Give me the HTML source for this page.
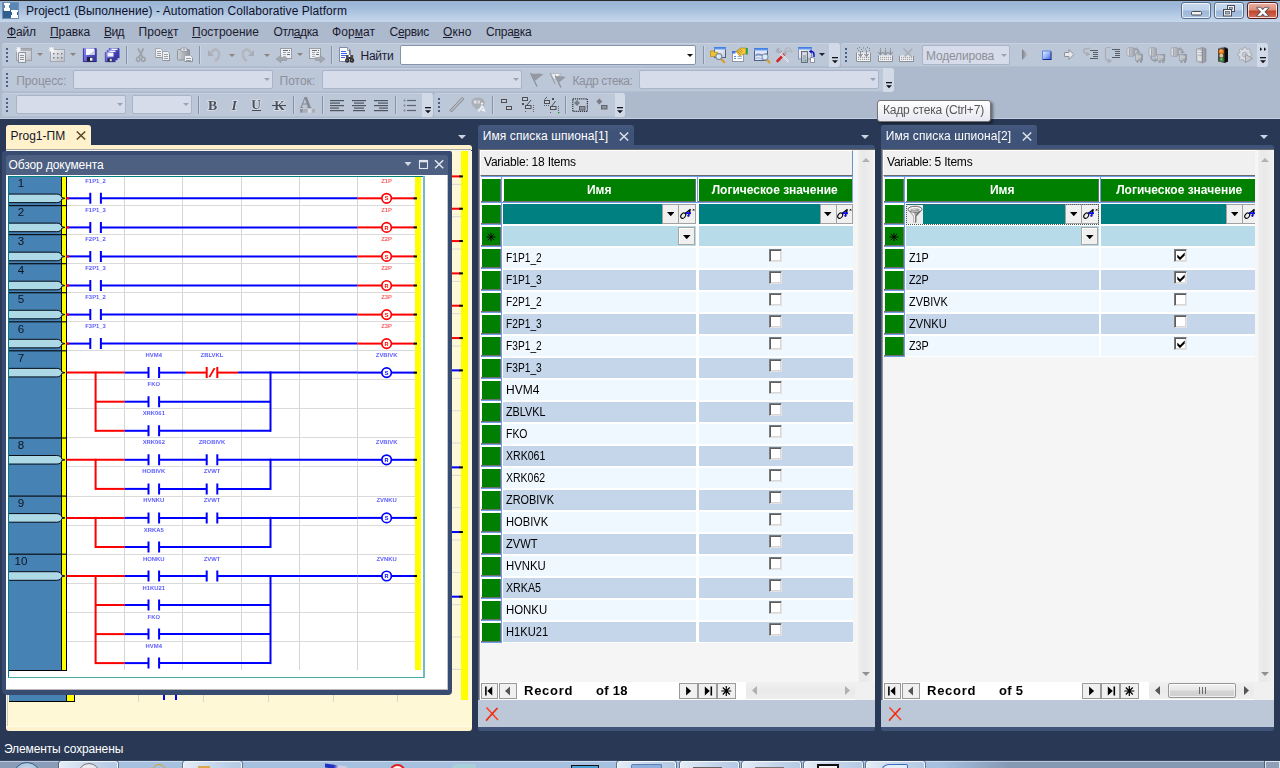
<!DOCTYPE html>
<html><head><meta charset="utf-8"><title>Automation Collaborative Platform</title>
<style>
*{box-sizing:border-box;margin:0;padding:0}
html,body{width:1280px;height:768px;overflow:hidden;background:#293955;font-family:"Liberation Sans",sans-serif;font-size:12px;color:#000}
.a{position:absolute}
.t{position:absolute;white-space:pre;line-height:1}
#title{left:0;top:0;width:1280px;height:22px;background:linear-gradient(#97b3d4 0,#a3bddb 40%,#b9cee6 75%,#c4d6ea 100%)}
#topline{left:0;top:0;width:1280px;height:1px;background:#2a2a2a}
#chrome{left:0;top:22px;width:1280px;height:97px;background:#adb9cd}
#chromeline{left:0;top:118px;width:1280px;height:1px;background:#c3cddd}
.tb{position:absolute;background:#bcc7d8;border-radius:3px;border-top:1px solid #c6d0df;border-bottom:1px solid #b2bed1}
.ovf{position:absolute;background:#d3dae7;border-radius:0 3px 3px 0}
.sep{position:absolute;width:1px;background:#8591a8}
.sep2{position:absolute;width:1px;background:#d4dbe8}
.grip{position:absolute;width:3px;height:15px;background:repeating-linear-gradient(#4f6289 0,#4f6289 2px,transparent 2px,transparent 4px)}
.cbd{position:absolute;background:#d6dce9;border:1px solid #a9b4c9;border-radius:2px}
.menu{top:26px;font-size:12px;color:#1b1b2f}
.menu u{text-decoration:underline;text-underline-offset:1px}
.wb{position:absolute;top:2px;height:17px;border-radius:3px;border:1px solid #596d8c;box-shadow:inset 0 0 0 1px rgba(255,255,255,.75);background:linear-gradient(#c8d9ee 0,#bfd2ea 48%,#9cb7d8 52%,#a9c2e0 100%)}
</style></head>
<body>
<div class="a" id="title"></div><div class="a" id="topline"></div>
<svg class="a" style="left:2px;top:2px" width="17" height="17" viewBox="0 0 17 17">
<rect x="0.5" y="0.5" width="16" height="16" fill="#2f5f8f" stroke="#6f8fb5"/>
<rect x="1" y="1" width="15" height="7" fill="#5c86b4"/>
<path d="M2 1h6v2h-1v3h1v3h-6v-3h1v-3h-1z" fill="#fff"/>
<path d="M9 8h7v2h-1v3h1v3h-7v-3h1v-3h-1z" fill="#fff"/>
</svg>
<div class="t " style="left:26px;top:5px;font-size:12px;color:#10102a;letter-spacing:0.065px;">Project1 (Выполнение) - Automation Collaborative Platform</div>
<div class="wb" style="left:1181px;width:30px"></div>
<div class="wb" style="left:1214px;width:30px"></div>
<div class="wb" style="left:1247px;width:31px;border-color:#5c1a1a;background:linear-gradient(#e9b0a2 0,#dc8e7b 48%,#c0452b 52%,#d4705a 100%)"></div>
<svg class="a" style="left:1181px;top:2px" width="97" height="17" viewBox="0 0 97 17">
<rect x="10.5" y="9.500" width="10" height="3.500" rx="1" fill="#f4f4f4" stroke="#4a4a55"/>
<rect x="46.5" y="3.500" width="7" height="6" fill="#f2f2f2" stroke="#4a4a55"/><rect x="48.5" y="5.5" width="3" height="2" fill="#9bb4d4" stroke="#4a4a55" stroke-width=".6"/>
<rect x="42.5" y="7.500" width="8" height="6.500" fill="#f2f2f2" stroke="#4a4a55"/><rect x="44.5" y="9.5" width="4" height="2.500" fill="#9bb4d4" stroke="#4a4a55" stroke-width=".6"/>
<clipPath id="xc"><rect x="75" y="5.300" width="14" height="9"/></clipPath><g clip-path="url(#xc)"><path d="M76.500 4.300l10.500 11M87 4.300l-10.500 11" stroke="#4e4e58" stroke-width="4.200"/><path d="M76.500 4.300l10.500 11M87 4.300l-10.500 11" stroke="#fbfbfb" stroke-width="2.500"/></g><path d="M75.800 5.300h3.600M84 5.300h3.600M75.800 14.300h3.600M84 14.300h3.600" stroke="#4e4e58" stroke-width=".8"/>
</svg>
<div class="a" id="chrome"></div><div class="a" id="chromeline"></div>
<div class="t menu" style="left:7px;top:26px;font-size:12px;color:#1b1b2f;letter-spacing:-0.13px;"><u>Ф</u>айл</div>
<div class="t menu" style="left:50px;top:26px;font-size:12px;color:#1b1b2f;letter-spacing:-0.092px;"><u>П</u>равка</div>
<div class="t menu" style="left:104px;top:26px;font-size:12px;color:#1b1b2f;letter-spacing:-0.573px;"><u>В</u>ид</div>
<div class="t menu" style="left:138.5px;top:26px;font-size:12px;color:#1b1b2f;letter-spacing:0.078px;">Прое<u>к</u>т</div>
<div class="t menu" style="left:192px;top:26px;font-size:12px;color:#1b1b2f;letter-spacing:0.017px;"><u>П</u>остроение</div>
<div class="t menu" style="left:273.5px;top:26px;font-size:12px;color:#1b1b2f;letter-spacing:-0.42px;">Отл<u>а</u>дка</div>
<div class="t menu" style="left:332px;top:26px;font-size:12px;color:#1b1b2f;letter-spacing:0.06px;">Фор<u>м</u>ат</div>
<div class="t menu" style="left:389.5px;top:26px;font-size:12px;color:#1b1b2f;letter-spacing:-0.265px;">С<u>е</u>рвис</div>
<div class="t menu" style="left:443px;top:26px;font-size:12px;color:#1b1b2f;letter-spacing:0.152px;"><u>О</u>кно</div>
<div class="t menu" style="left:486px;top:26px;font-size:12px;color:#1b1b2f;letter-spacing:-0.226px;">Спра<u>в</u>ка</div>
<div class="tb" style="left:2px;top:43px;width:838px;height:24px"></div>
<div class="ovf" style="left:829px;top:43px;width:11px;height:24px"></div>
<div class="t" style="left:360.5px;top:49.5px;font-size:12px;color:#1b1b33;letter-spacing:-0.25px;">Найти</div>
<div class="a" style="left:400px;top:45px;width:296px;height:20px;background:#fff;border:1px solid #8593ad;border-radius:2px"></div>
<div class="tb" style="left:841px;top:43px;width:427px;height:24px"></div>
<div class="ovf" style="left:1257px;top:43px;width:11px;height:24px"></div>
<div class="cbd" style="left:922px;top:45px;width:88px;height:20px"></div>
<div class="t" style="left:926px;top:49.6px;font-size:12px;color:#8d8f9a;letter-spacing:-0.18px;">Моделирова</div>
<div class="tb" style="left:2px;top:68px;width:892px;height:24px"></div>
<div class="ovf" style="left:883px;top:68px;width:11px;height:24px"></div>
<div class="t" style="left:16.2px;top:74.5px;font-size:12px;color:#8d8f9a;letter-spacing:-0.08px;">Процесс:</div>
<div class="cbd" style="left:73px;top:70px;width:200px;height:19px"></div>
<div class="t" style="left:279.5px;top:74.5px;font-size:12px;color:#8d8f9a;letter-spacing:0px;">Поток:</div>
<div class="cbd" style="left:322px;top:70px;width:200px;height:19px"></div>
<div class="t" style="left:572.5px;top:74.5px;font-size:12px;color:#8d8f9a;letter-spacing:-0.38px;">Кадр стека:</div>
<div class="cbd" style="left:639px;top:70px;width:240px;height:19px"></div>
<div class="tb" style="left:2px;top:93px;width:431px;height:24px"></div>
<div class="ovf" style="left:422px;top:93px;width:11px;height:24px"></div>
<div class="cbd" style="left:16px;top:95px;width:110px;height:19px"></div>
<div class="cbd" style="left:132px;top:95px;width:60px;height:19px"></div>
<div class="tb" style="left:434px;top:93px;width:191px;height:24px"></div>
<div class="ovf" style="left:615px;top:93px;width:10px;height:24px"></div>
<svg class="a" style="left:0;top:43px;will-change:transform" width="1280" height="75" viewBox="0 43 1280 75"><defs><linearGradient id="gw" x1="0" y1="0" x2="1" y2="1"><stop offset="0" stop-color="#f4f5f7"/><stop offset="1" stop-color="#b9bdc4"/></linearGradient><linearGradient id="gd" x1="0" y1="0" x2="1" y2="0"><stop offset="0" stop-color="#d0d3d8"/><stop offset="1" stop-color="#8f939b"/></linearGradient><linearGradient id="sv" x1="0" y1="0" x2="1" y2="0.300"><stop offset="0" stop-color="#9696f2"/><stop offset=".45" stop-color="#6060d4"/><stop offset="1" stop-color="#3a3aa6"/></linearGradient><linearGradient id="bt" x1="0" y1="0" x2="0" y2="1"><stop offset="0" stop-color="#3a74e0"/><stop offset="1" stop-color="#78aaf4"/></linearGradient><linearGradient id="st" x1="0" y1="0" x2="1" y2="1"><stop offset="0" stop-color="#e8f0ff"/><stop offset=".55" stop-color="#8fb0f4"/><stop offset="1" stop-color="#3a66d8"/></linearGradient><linearGradient id="wb" x1="0" y1="0" x2="1" y2="1"><stop offset="0" stop-color="#ffffff"/><stop offset="1" stop-color="#c4cad8"/></linearGradient><linearGradient id="gc" x1="0" y1="0" x2="1" y2="0"><stop offset="0" stop-color="#d4d7dc"/><stop offset="1" stop-color="#9ea2aa"/></linearGradient><linearGradient id="gp" x1="0" y1="0" x2="1" y2="0"><stop offset="0" stop-color="#7d8189"/><stop offset="1" stop-color="#c4c7cc"/></linearGradient></defs><rect x="6" y="48" width="2" height="2" fill="#4a5f8c"/><rect x="6" y="52" width="2" height="2" fill="#4a5f8c"/><rect x="6" y="56" width="2" height="2" fill="#4a5f8c"/><rect x="6" y="60" width="2" height="2" fill="#4a5f8c"/><rect x="16.5" y="48.5" width="15" height="12" fill="url(#gw)" stroke="#9da1a8" stroke-width="1"/><rect x="17" y="49" width="14" height="2" fill="#a9adb4"/><rect x="18.5" y="52.5" width="7" height="10" fill="#edeff2" stroke="#8f939b" stroke-width="1"/><rect x="20" y="55" width="4" height="1" fill="#8f939b"/><rect x="20" y="57" width="4" height="1" fill="#8f939b"/><rect x="20" y="59" width="4" height="1" fill="#8f939b"/><path d="M18.5 47v5.500M15.7 49.7h5.600M16.5 47.7l4 4M20.5 47.7l-4 4" stroke="#f6f7f9" stroke-width="1.100"/><path d="M37 53h6l-3.0 3z" fill="#8a847e"/><rect x="50.5" y="49.5" width="14" height="12" fill="url(#gw)" stroke="#a4a8af" stroke-width="1"/><rect x="53" y="53" width="1.5" height="1.5" fill="#7d8189"/><rect x="53" y="57" width="1.5" height="1.5" fill="#7d8189"/><rect x="57" y="53" width="1.5" height="1.5" fill="#7d8189"/><rect x="57" y="57" width="1.5" height="1.5" fill="#7d8189"/><rect x="61" y="53" width="1.5" height="1.5" fill="#7d8189"/><rect x="61" y="57" width="1.5" height="1.5" fill="#7d8189"/><path d="M51.5 47v5.500M48.7 49.7h5.600M49.5 47.7l4 4M53.5 47.7l-4 4" stroke="#f6f7f9" stroke-width="1.100"/><path d="M70 53h6l-3.0 3z" fill="#8a847e"/><path d="M83 48h13l.8 .8v13.200h-13.800z" fill="url(#sv)"/><path d="M83.400 48.400v13.200h13" fill="none" stroke="#24247c" stroke-width=".8"/><rect x="86" y="48.5" width="8.5" height="6.5" fill="#f6f7ff"/><path d="M94.500 50.500v4.500h-6z" fill="#c9cde0"/><rect x="87" y="57" width="6" height="4.5" fill="#20203c"/><rect x="90" y="57.8" width="2.5" height="3" fill="#eeeef4"/><path d="M109 48h9.700l.8 .8v9.200h-10.500z" fill="url(#sv)"/><path d="M109.3 48v9.700h10" fill="none" stroke="#2c2c8c" stroke-width=".6"/><rect x="111.5" y="48.6" width="6" height="1.6" fill="#f4f5ff"/><path d="M107 50h9.700l.8 .8v9.200h-10.500z" fill="url(#sv)"/><path d="M107.3 50v9.700h10" fill="none" stroke="#2c2c8c" stroke-width=".6"/><rect x="109.5" y="50.6" width="6" height="1.6" fill="#f4f5ff"/><path d="M105 52h9.700l.8 .8v9.200h-10.500z" fill="url(#sv)"/><path d="M105.3 52v9.700h10" fill="none" stroke="#2c2c8c" stroke-width=".6"/><rect x="107.5" y="52.6" width="6" height="4" fill="#f4f5ff"/><rect x="107.5" y="58.3" width="5" height="3.4" fill="#24243e"/><rect x="109.8" y="58.8" width="2" height="2.4" fill="#d8d8e2"/><rect x="126" y="46" width="1" height="18" fill="#8693ab"/><rect x="127" y="46" width="1" height="18" fill="#cbd4e2"/><path d="M138 48.300L142.800 57.500M143.600 48.300L138.800 57.500" stroke="#9ea2a9" stroke-width="1.800" fill="none"/><ellipse cx="138.200" cy="59.300" rx="1.700" ry="2.100" fill="none" stroke="#9ea2a9" stroke-width="1.600"/><ellipse cx="143.300" cy="59.300" rx="1.700" ry="2.100" fill="none" stroke="#9ea2a9" stroke-width="1.600"/><path d="M155.5 48.5h5l2 2v7h-7z" fill="#eef0f3" stroke="#a2a6ad" stroke-width="1"/><rect x="162" y="51" width="1" height="7" fill="#8f939b"/><rect x="156" y="57" width="7" height="1" fill="#8f939b"/><rect x="157" y="51" width="4" height="1" fill="#9a9ea6"/><rect x="157" y="53" width="4" height="1" fill="#9a9ea6"/><rect x="157" y="55" width="4" height="1" fill="#9a9ea6"/><path d="M162.5 51.5h5l2 2v7h-7z" fill="#eef0f3" stroke="#a2a6ad" stroke-width="1"/><rect x="169" y="54" width="1" height="7" fill="#8f939b"/><rect x="163" y="60" width="7" height="1" fill="#8f939b"/><rect x="164" y="54" width="4" height="1" fill="#9a9ea6"/><rect x="164" y="56" width="4" height="1" fill="#9a9ea6"/><rect x="164" y="58" width="4" height="1" fill="#9a9ea6"/><rect x="177.5" y="49.5" width="12" height="10.5" fill="url(#gd)" stroke="#8f939b" stroke-width="1" rx="1"/><rect x="181" y="48" width="6" height="3.5" fill="#e4e6ea" stroke="#8f939b" stroke-width="0.8" rx="1"/><rect x="183.3" y="49" width="1.4" height="1.4" fill="#8f939b"/><path d="M184.5 55.5h6l2 2v4h-8z" fill="#eef0f3" stroke="#a2a6ad" stroke-width="1"/><rect x="192" y="58" width="1" height="4" fill="#8f939b"/><rect x="185" y="61" width="8" height="1" fill="#8f939b"/><rect x="186" y="58" width="5" height="1" fill="#9a9ea6"/><rect x="186" y="60" width="5" height="1" fill="#9a9ea6"/><rect x="199" y="46" width="1" height="18" fill="#8693ab"/><rect x="200" y="46" width="1" height="18" fill="#cbd4e2"/><path d="M208 50v6h6z" fill="#a9adb4"/><path d="M211 53c3-5.500 9-4 8 2.500c-.4 2.500-2 4.500-4 5.500" fill="none" stroke="#b3b6bc" stroke-width="2.400"/><path d="M229 54h6l-3.0 3z" fill="#8a847e"/><path d="M254 50v6h-6z" fill="#a9adb4"/><path d="M251 53c-3-5.500-9-4-8 2.500c.4 2.500 2 4.500 4 5.500" fill="none" stroke="#b3b6bc" stroke-width="2.400"/><path d="M264 54h6l-3.0 3z" fill="#8a847e"/><rect x="280.5" y="48.5" width="11" height="10" fill="#eef0f3" stroke="#9a9ea6" stroke-width="1"/><rect x="283" y="50" width="5" height="1" fill="#6a6e76"/><rect x="289" y="50" width="1" height="1" fill="#6a6e76"/><rect x="283" y="52" width="3" height="1" fill="#9a9ea6"/><rect x="287.5" y="52" width="2.5" height="1" fill="#9a9ea6"/><rect x="283" y="54" width="3" height="1" fill="#b0b4ba"/><rect x="287" y="54" width="3" height="1" fill="#6a6e76"/><rect x="283" y="56" width="3" height="1" fill="#b0b4ba"/><path d="M276 59l5-3.800v2.300h5.500v3h-5.500v2.300z" fill="#a3a7ae" stroke="#8b8f97" stroke-width=".5"/><path d="M297 53h6l-3.0 3z" fill="#8a847e"/><rect x="309.5" y="48.5" width="11" height="10" fill="#eef0f3" stroke="#9a9ea6" stroke-width="1"/><rect x="312" y="50" width="5" height="1" fill="#6a6e76"/><rect x="318" y="50" width="1" height="1" fill="#6a6e76"/><rect x="312" y="52" width="3" height="1" fill="#9a9ea6"/><rect x="316.5" y="52" width="2.5" height="1" fill="#9a9ea6"/><rect x="312" y="54" width="3" height="1" fill="#b0b4ba"/><rect x="316" y="54" width="3" height="1" fill="#6a6e76"/><rect x="312" y="56" width="3" height="1" fill="#b0b4ba"/><path d="M325 59l-5-3.800v2.300h-4.500v3h4.500v2.300z" fill="#a3a7ae" stroke="#8b8f97" stroke-width=".5"/><rect x="331" y="46" width="1" height="18" fill="#8693ab"/><rect x="332" y="46" width="1" height="18" fill="#cbd4e2"/><path d="M339.500 47.500h8l3 3v11h-11z" fill="#fff" stroke="#7f8ca8" stroke-width="1"/><path d="M347.500 47.500v3h3" fill="#dfe5f2" stroke="#7f8ca8" stroke-width=".8"/><rect x="341" y="51" width="5" height="1" fill="#3568e0"/><rect x="341" y="53" width="6" height="1" fill="#3568e0"/><rect x="341" y="55" width="5" height="1" fill="#3568e0"/><rect x="341" y="57" width="4" height="1" fill="#3568e0"/><path d="M349.500 49v6" stroke="#7a7a80" stroke-width="1.200"/><rect x="346" y="55" width="2.600" height="5" fill="#4a4a4a"/><rect x="350.600" y="55" width="2.600" height="5" fill="#4a4a4a"/><rect x="348.400" y="57" width="2.400" height="2.200" fill="#2a2a2a"/><circle cx="347.200" cy="60.500" r="2.200" fill="#2c2c2c"/><circle cx="352" cy="60.500" r="2.200" fill="#2c2c2c"/><circle cx="347" cy="60.300" r=".8" fill="#888"/><circle cx="351.800" cy="60.300" r=".8" fill="#888"/><path d="M687 54h6l-3.0 3z" fill="#111"/><rect x="703" y="46" width="1" height="18" fill="#8693ab"/><rect x="704" y="46" width="1" height="18" fill="#cbd4e2"/><rect x="714.5" y="47.5" width="11" height="10" fill="url(#wb)" stroke="#44547c" stroke-width="0.9"/><rect x="714" y="47" width="12" height="2.6" fill="url(#bt)"/><path d="M710.500 51h3l1 1.200h3v4.300h-7z" fill="#f0c234" stroke="#b08a18" stroke-width=".7"/><path d="M720.800 58.800l3.500 3.400" stroke="#d8a028" stroke-width="2.200" stroke-linecap="round"/><circle cx="718.800" cy="56.600" r="3" fill="#d4ecf9" stroke="#7d8a9c" stroke-width="1.100"/><rect x="732.5" y="51.5" width="11" height="10" fill="#fff" stroke="#8a90a0" stroke-width="0.9"/><rect x="732" y="51" width="3.5" height="2.5" fill="#3f78e0"/><rect x="734" y="56" width="2" height="1" fill="#6a86c8"/><rect x="737.5" y="56" width="4.5" height="1" fill="#9ab0dc"/><rect x="734" y="58" width="2" height="1" fill="#6a86c8"/><rect x="737.5" y="58" width="4.5" height="1" fill="#9ab0dc"/><path d="M736 51.500l4.500-3.500h5.500v5.500l-4.500 1.500-2 .8z" fill="#f3c83c" stroke="#9a7818" stroke-width=".6"/><path d="M737 51l3.500 3.500M738.500 50l3 3M740 49l2.500 2.500" stroke="#8a6a18" stroke-width=".6"/><rect x="746" y="48" width="1.8" height="6.5" fill="#28a048"/><rect x="754.5" y="48.5" width="13" height="12" fill="#dfe8f8" stroke="#40507c" stroke-width="0.9"/><rect x="754" y="48" width="14" height="2.6" fill="url(#bt)"/><path d="M755.500 54.500c3-3 6 1.500 11.500-1.800v2c-5 3-8-1-11.500 2z" fill="#7d94c4"/><path d="M755 58.500c3-1.500 5 0 7 .5" stroke="#9fb2d8" fill="none"/><path d="M766.500 59.200l3 3.300" stroke="#d8a028" stroke-width="2.200" stroke-linecap="round"/><circle cx="765" cy="57" r="3" fill="#d8eefa" stroke="#8a96a8" stroke-width="1.100"/><path d="M777.500 61l7-7.200" stroke="#d42424" stroke-width="2.600" stroke-linecap="round"/><path d="M784 54.300l2-2" stroke="#aab0ba" stroke-width="2"/><path d="M779.500 52.500l8.500 8.700" stroke="#f2f3f5" stroke-width="1.800" stroke-linecap="round"/><path d="M780 53l8 8.200" stroke="#a0a5ae" stroke-width=".6"/><path d="M776.500 50.500c0-1.500 1.500-2.500 3-2l-1.300 1.500 .5 1.300 1.500 .3 1.200-1.300c.5 1.500-.5 3-2 3s-2.900-1.300-2.900-2.800z" fill="#aeb3bc" stroke="#8f95a0" stroke-width=".4"/><path d="M784.500 50l2.500-2h2.500l2.500 3.500-1 1-1.800-1.800-2 .3-1.200 1z" fill="#c3c8d0" stroke="#8f95a0" stroke-width=".5"/><rect x="798.5" y="47.5" width="13" height="11.5" fill="url(#wb)" stroke="#7d90bc" stroke-width="0.9"/><rect x="798" y="47" width="14" height="2.6" fill="url(#bt)"/><rect x="801.5" y="51.5" width="6" height="11" fill="#c9ced6" stroke="#5e6472" stroke-width="0.9"/><rect x="803" y="53.5" width="3" height="1" fill="#e8ebf0"/><rect x="803" y="55.5" width="3" height="1" fill="#8a90a0"/><rect x="802.5" y="57" width="4" height="5" fill="#a8b6cc"/><rect x="805" y="60" width="1.2" height="1.2" fill="#30c030"/><path d="M810.500 57.500h2.500l1.500 1.500v3.500h-4z" fill="#fff" stroke="#6a7080" stroke-width=".7"/><path d="M811 51.500c2 0 3 1.500 3 3v2.500" stroke="#1010c0" stroke-width="1.400" fill="none"/><path d="M808.800 51.500l2.700-2v4z" fill="#1010c0"/><path d="M819 53h6l-3.0 3z" fill="#1c202a"/><rect x="832" y="57" width="6" height="1.300" fill="#10141c"/><path d="M832 60.2h6l-3 3z" fill="#10141c"/><rect x="845" y="48" width="2" height="2" fill="#4a5f8c"/><rect x="845" y="52" width="2" height="2" fill="#4a5f8c"/><rect x="845" y="56" width="2" height="2" fill="#4a5f8c"/><rect x="845" y="60" width="2" height="2" fill="#4a5f8c"/><path d="M856.5 52.5v9.0h14v-9.0" fill="#f4f5f7" stroke="#8a8e95" stroke-width="1"/><rect x="858.2" y="56.8" width="1" height="1" fill="#6f737b"/><rect x="858.2" y="58.8" width="1" height="1" fill="#6f737b"/><rect x="860.2" y="56.8" width="1" height="1" fill="#6f737b"/><rect x="860.2" y="58.8" width="1" height="1" fill="#6f737b"/><rect x="862.2" y="56.8" width="1" height="1" fill="#6f737b"/><rect x="862.2" y="58.8" width="1" height="1" fill="#6f737b"/><rect x="864.2" y="56.8" width="1" height="1" fill="#6f737b"/><rect x="864.2" y="58.8" width="1" height="1" fill="#6f737b"/><rect x="866.2" y="56.8" width="1" height="1" fill="#6f737b"/><rect x="866.2" y="58.8" width="1" height="1" fill="#6f737b"/><rect x="868.2" y="56.8" width="1" height="1" fill="#6f737b"/><rect x="868.2" y="58.8" width="1" height="1" fill="#6f737b"/><rect x="857" y="48" width="1" height="1" fill="#7f838b"/><rect x="859" y="47" width="1" height="1" fill="#7f838b"/><rect x="861" y="49" width="1" height="1" fill="#7f838b"/><rect x="863" y="47.5" width="1" height="1" fill="#7f838b"/><rect x="865" y="48.5" width="1" height="1" fill="#7f838b"/><rect x="867" y="47" width="1" height="1" fill="#7f838b"/><rect x="869" y="48" width="1" height="1" fill="#7f838b"/><rect x="858" y="50" width="1" height="1" fill="#7f838b"/><rect x="862" y="51" width="1" height="1" fill="#7f838b"/><rect x="866" y="50.5" width="1" height="1" fill="#7f838b"/><rect x="869" y="50" width="1" height="1" fill="#7f838b"/><path d="M860.5 51v5M858.3 53.800l2.200 2.500 2.200-2.500" stroke="#8f939b" stroke-width="1.200" fill="none"/><path d="M866.5 51v5M864.3 53.800l2.200 2.500 2.200-2.500" stroke="#8f939b" stroke-width="1.200" fill="none"/><path d="M878.5 55.5v6.0h14v-6.0" fill="#f4f5f7" stroke="#8a8e95" stroke-width="1"/><rect x="880.2" y="56.8" width="1" height="1" fill="#6f737b"/><rect x="880.2" y="58.8" width="1" height="1" fill="#6f737b"/><rect x="882.2" y="56.8" width="1" height="1" fill="#6f737b"/><rect x="882.2" y="58.8" width="1" height="1" fill="#6f737b"/><rect x="884.2" y="56.8" width="1" height="1" fill="#6f737b"/><rect x="884.2" y="58.8" width="1" height="1" fill="#6f737b"/><rect x="886.2" y="56.8" width="1" height="1" fill="#6f737b"/><rect x="886.2" y="58.8" width="1" height="1" fill="#6f737b"/><rect x="888.2" y="56.8" width="1" height="1" fill="#6f737b"/><rect x="888.2" y="58.8" width="1" height="1" fill="#6f737b"/><rect x="890.2" y="56.8" width="1" height="1" fill="#6f737b"/><rect x="890.2" y="58.8" width="1" height="1" fill="#6f737b"/><rect x="880.0" y="48" width="1" height="1" fill="#8f939b"/><path d="M880.5 49.500v5M878.3 52.200l2.200 2.500 2.200-2.500" stroke="#8f939b" stroke-width="1.100" fill="none"/><rect x="885.0" y="48" width="1" height="1" fill="#8f939b"/><path d="M885.5 49.500v5M883.3 52.200l2.200 2.500 2.200-2.500" stroke="#8f939b" stroke-width="1.100" fill="none"/><rect x="890.0" y="48" width="1" height="1" fill="#8f939b"/><path d="M890.5 49.500v5M888.3 52.200l2.200 2.500 2.200-2.500" stroke="#8f939b" stroke-width="1.100" fill="none"/><path d="M899.5 55.5v6.0h14v-6.0" fill="#f4f5f7" stroke="#8a8e95" stroke-width="1"/><rect x="901.2" y="56.8" width="1" height="1" fill="#6f737b"/><rect x="901.2" y="58.8" width="1" height="1" fill="#6f737b"/><rect x="903.2" y="56.8" width="1" height="1" fill="#6f737b"/><rect x="903.2" y="58.8" width="1" height="1" fill="#6f737b"/><rect x="905.2" y="56.8" width="1" height="1" fill="#6f737b"/><rect x="905.2" y="58.8" width="1" height="1" fill="#6f737b"/><rect x="907.2" y="56.8" width="1" height="1" fill="#6f737b"/><rect x="907.2" y="58.8" width="1" height="1" fill="#6f737b"/><rect x="909.2" y="56.8" width="1" height="1" fill="#6f737b"/><rect x="909.2" y="58.8" width="1" height="1" fill="#6f737b"/><rect x="911.2" y="56.8" width="1" height="1" fill="#6f737b"/><rect x="911.2" y="58.8" width="1" height="1" fill="#6f737b"/><path d="M903.500 48.500l8.500 8.500M912 49l-7.500 7.500" stroke="#a9adb4" stroke-width="1.500"/><path d="M1001 54h6l-3.0 3z" fill="#9aa3b4"/><path d="M1022 49v11l6-5.500z" fill="url(#gp)"/><rect x="1042.5" y="51.5" width="8" height="8" fill="url(#st)"/><path d="M1042.500 60v-9h8.500" fill="none" stroke="#5a86e8" stroke-width="1"/><path d="M1043 59.500h8v-8" fill="none" stroke="#14288c" stroke-width="1.100"/><path d="M1064.500 52.500h4.500v-3l4.800 5-4.800 5v-3h-4.500z" fill="#e6e8ec" stroke="#90949c" stroke-width="1"/><rect x="1090" y="50" width="8" height="1" fill="#585c64"/><rect x="1093" y="52" width="5" height="1" fill="#585c64"/><rect x="1093" y="54" width="5" height="1" fill="#585c64"/><rect x="1093" y="56" width="5" height="1" fill="#585c64"/><rect x="1090" y="58" width="8" height="1" fill="#585c64"/><path d="M1090 48.500c-4-.5-6.500 .5-6.500 2.500c0 1.500 1.500 2.500 4 2.800" fill="none" stroke="#a9adb4" stroke-width="1.300"/><path d="M1086.500 51.500l4 2.700-4.500 2.300z" fill="#a9adb4"/><rect x="1112" y="49" width="8" height="1" fill="#585c64"/><rect x="1115" y="51" width="5" height="1" fill="#585c64"/><rect x="1115" y="53" width="5" height="1" fill="#585c64"/><rect x="1115" y="55" width="5" height="1" fill="#585c64"/><rect x="1112" y="57" width="8" height="1" fill="#585c64"/><path d="M1111 47.500h-3.500c-1.500 0-2 .8-2 2v8c0 2 1 3 3 3.300" fill="none" stroke="#a9adb4" stroke-width="1.200"/><path d="M1108 58.500l4.500 2.500-4.800 2.500z" fill="#a9adb4"/><path d="M1127 49.0c0-2 7.500-2 7.500 0v6c0 2-7.500 2-7.500 0z" fill="url(#gc)" stroke="#9a9ea6" stroke-width=".7"/><path d="M1129.5 48.5v7.500" stroke="#9a9ea6" stroke-width=".8"/><path d="M1128.2 48.7v6.500" stroke="#e4e6ea" stroke-width=".9"/><rect x="1135.5" y="54" width="7" height="6.5" fill="url(#gd)" stroke="#8b8f97" stroke-width="0.6"/><rect x="1136.5" y="61" width="2.0" height="1.5" fill="#8b8f97"/><rect x="1140.0" y="61" width="2.0" height="1.5" fill="#8b8f97"/><rect x="1137.0" y="55.5" width="4" height="2.5" fill="#c4c7cc"/><path d="M1138.500 53.500v-2c0-1.500-1-2.500-2.500-2.500" stroke="#9a9ea6" stroke-width="1.300" fill="none"/><path d="M1136.500 47l-2.800 2 2.800 2z M1136 53l2.500-2.800 2.500 2.800z" fill="#9a9ea6"/><path d="M1149 49.0c0-2 7.500-2 7.500 0v6c0 2-7.500 2-7.500 0z" fill="url(#gc)" stroke="#9a9ea6" stroke-width=".7"/><path d="M1151.5 48.5v7.500" stroke="#9a9ea6" stroke-width=".8"/><path d="M1150.2 48.7v6.500" stroke="#e4e6ea" stroke-width=".9"/><rect x="1157.8" y="54.3" width="7" height="6.5" fill="url(#gd)" stroke="#8b8f97" stroke-width="0.6"/><rect x="1158.8" y="61.3" width="2.0" height="1.5" fill="#8b8f97"/><rect x="1162.3" y="61.3" width="2.0" height="1.5" fill="#8b8f97"/><rect x="1159.3" y="55.8" width="4" height="2.5" fill="#c4c7cc"/><path d="M1151 56.500c0 3 2 4.500 5 4" stroke="#9a9ea6" stroke-width="1.600" fill="none"/><path d="M1154.500 57.800l3.500 2.500-3.800 2.300z" fill="#9a9ea6"/><path d="M1171 49.0c0-2 7.500-2 7.500 0v6c0 2-7.500 2-7.500 0z" fill="url(#gc)" stroke="#9a9ea6" stroke-width=".7"/><path d="M1173.5 48.5v7.500" stroke="#9a9ea6" stroke-width=".8"/><path d="M1172.2 48.7v6.500" stroke="#e4e6ea" stroke-width=".9"/><rect x="1179.5" y="54.3" width="7" height="6.5" fill="url(#gd)" stroke="#8b8f97" stroke-width="0.6"/><rect x="1180.5" y="61.3" width="2.0" height="1.5" fill="#8b8f97"/><rect x="1184.0" y="61.3" width="2.0" height="1.5" fill="#8b8f97"/><rect x="1181.0" y="55.8" width="4" height="2.5" fill="#c4c7cc"/><path d="M1182.500 53.500v-2c0-1.500-1-2.500-2.500-2.500" stroke="#9a9ea6" stroke-width="1.300" fill="none"/><path d="M1180.500 47l-2.800 2 2.800 2z M1180 53l2.500-2.800 2.500 2.800z" fill="#9a9ea6"/><path d="M1196.500 49l6-1.500 3.500 1v13l-3.500 1.500-6-1.500z" fill="url(#gd)" stroke="#8b8f97" stroke-width=".6"/><path d="M1202.500 47.500v15.500" stroke="#7d8189" stroke-width=".7"/><path d="M1197.500 51l4 .3M1197.500 53.500l4 .3" stroke="#eceef1" stroke-width="1.300"/><path d="M1197.800 56l3.700.3v4.700l-3.700-.8z" fill="#e0e3e7"/><path d="M1218 48.500l6.500-1.500 3.500 1.500v13l-3.500 1.500-6.500-1.500z" fill="#4a4a4a"/><path d="M1224.500 47v16l3.500-1.500v-13z" fill="#0c0c0c"/><path d="M1218 48.500l6.500-1.500 3.500 1.500" fill="none" stroke="#9a9a9a" stroke-width=".6"/><circle cx="1221.300" cy="51.500" r="2.500" fill="#ff7e0c"/><circle cx="1221" cy="50.800" r="1.100" fill="#ffb060"/><circle cx="1221.300" cy="55.700" r="1.900" fill="#d8c890"/><circle cx="1221.500" cy="59.700" r="2" fill="#38a038"/><circle cx="1221.200" cy="59.200" r=".8" fill="#90d890"/><path d="M1244 47l1.800.2.500 1.700 1.400.7 1.600-.8 1.200 1.300-.8 1.500.6 1.500 1.700.6v1.700l-1.700.6-.6 1.400.8 1.600-1.200 1.200-1.600-.8-1.400.6-.6 1.700h-1.700l-.6-1.700-1.400-.6-1.600.8-1.200-1.200.8-1.600-.6-1.400-1.700-.6v-1.700l1.700-.6.600-1.500-.8-1.500 1.200-1.300 1.600.8 1.400-.7z" fill="#d9dce1" stroke="#a3a7ae" stroke-width=".9"/><circle cx="1244.800" cy="54.600" r="2.400" fill="#c4cbd8" stroke="#a3a7ae" stroke-width=".8"/><path d="M1245.500 54.500l7.300 4-7.300 4z" fill="#c4c7cc" stroke="#90949c" stroke-width=".8"/><path d="M1260 47.300l2.200 1.900-2.200 1.900zM1264 47.300l2.200 1.900-2.200 1.900z" fill="#10141c"/><rect x="1260" y="57" width="6" height="1.300" fill="#10141c"/><path d="M1260 60.2h6l-3 3z" fill="#10141c"/><rect x="6" y="73" width="2" height="2" fill="#4a5f8c"/><rect x="6" y="77" width="2" height="2" fill="#4a5f8c"/><rect x="6" y="81" width="2" height="2" fill="#4a5f8c"/><rect x="6" y="85" width="2" height="2" fill="#4a5f8c"/><path d="M264 78h6l-3.0 3z" fill="#9aa3b4"/><path d="M513 78h6l-3.0 3z" fill="#9aa3b4"/><path d="M530.500 73l6.500 13.500" stroke="#8b8f97" stroke-width="1.200"/><path d="M530.800 73.200c3.500 1.800 7-1 12.700 1.300c-3 1.500-5.500 4-8.800 6.500z" fill="#959aa2"/><path d="M550.200 73l4.800 11" stroke="#9a9ea6" stroke-width="1.100"/><path d="M550.700 73.500c3 1.300 6-.8 10.300 .7c-2.500 1.300-4 3.300-6.800 5.300z" fill="#f4f5f7" stroke="#9a9ea6" stroke-width=".5"/><path d="M555 75.500l6 12" stroke="#8b8f97" stroke-width="1.200"/><path d="M555.300 75.800c3 1.500 6-.8 10.200 1.700c-2.500 1.300-4.500 3.500-7 5.500z" fill="#959aa2"/><path d="M870 78h6l-3.0 3z" fill="#9aa3b4"/><rect x="886" y="82" width="6" height="1.300" fill="#10141c"/><path d="M886 85.2h6l-3 3z" fill="#10141c"/><rect x="6" y="98" width="2" height="2" fill="#4a5f8c"/><rect x="6" y="102" width="2" height="2" fill="#4a5f8c"/><rect x="6" y="106" width="2" height="2" fill="#4a5f8c"/><rect x="6" y="110" width="2" height="2" fill="#4a5f8c"/><path d="M117 103h6l-3.0 3z" fill="#9aa3b4"/><path d="M183 103h6l-3.0 3z" fill="#9aa3b4"/><rect x="198" y="96" width="1" height="18" fill="#8693ab"/><rect x="199" y="96" width="1" height="18" fill="#cbd4e2"/><text x="208" y="109.7" font-family="Liberation Serif" font-weight="700" font-size="13.8" fill="#e6eaf1" stroke="#e6eaf1" stroke-width="1.600" opacity=".8" text-rendering="geometricPrecision" >B</text><text x="208" y="109.7" font-family="Liberation Serif" font-weight="700" font-size="13.8" fill="#464c57" opacity=".97" text-rendering="geometricPrecision" >B</text><text x="231.5" y="109.7" font-family="Liberation Serif" font-weight="700" font-size="13.8" fill="#e6eaf1" stroke="#e6eaf1" stroke-width="1.600" opacity=".8" text-rendering="geometricPrecision" font-style="italic">I</text><text x="231.5" y="109.7" font-family="Liberation Serif" font-weight="700" font-size="13.8" fill="#464c57" opacity=".97" text-rendering="geometricPrecision" font-style="italic">I</text><text x="251.3" y="108.6" font-family="Liberation Serif" font-weight="700" font-size="13.4" fill="#e6eaf1" stroke="#e6eaf1" stroke-width="1.600" opacity=".8" text-rendering="geometricPrecision" >U</text><text x="251.3" y="108.6" font-family="Liberation Serif" font-weight="700" font-size="13.4" fill="#464c57" opacity=".97" text-rendering="geometricPrecision" >U</text><rect x="252" y="110" width="9" height="1" fill="#464c57"/><text x="274.3" y="109.7" font-family="Liberation Serif" font-weight="700" font-size="13.4" fill="#e6eaf1" stroke="#e6eaf1" stroke-width="1.600" opacity=".8" text-rendering="geometricPrecision" >K</text><text x="274.3" y="109.7" font-family="Liberation Serif" font-weight="700" font-size="13.4" fill="#464c57" opacity=".97" text-rendering="geometricPrecision" >K</text><rect x="272" y="105" width="14" height="1" fill="#464c57"/><rect x="293" y="96" width="1" height="18" fill="#8693ab"/><rect x="294" y="96" width="1" height="18" fill="#cbd4e2"/><text x="299.800" y="108.300" font-family="Liberation Serif" font-weight="700" font-size="16.500" fill="#7f838b" opacity=".9" text-rendering="geometricPrecision">A</text><rect x="300" y="109" width="3.3" height="3.6" fill="#8f939b"/><rect x="304" y="109" width="3.3" height="3.6" fill="#a9adb4"/><rect x="308" y="109" width="3.3" height="3.6" fill="#d4d7dc"/><rect x="312" y="109" width="3" height="3.6" fill="#a9adb4"/><rect x="322" y="96" width="1" height="18" fill="#8693ab"/><rect x="323" y="96" width="1" height="18" fill="#cbd4e2"/><rect x="330" y="100.0" width="14" height="1.2" fill="#4e5560"/><rect x="330" y="102.5" width="10" height="1.2" fill="#4e5560"/><rect x="330" y="105.0" width="14" height="1.2" fill="#4e5560"/><rect x="330" y="107.5" width="9" height="1.2" fill="#4e5560"/><rect x="330" y="110" width="14" height="1.2" fill="#4e5560"/><rect x="352.0" y="100.0" width="14" height="1.2" fill="#4e5560"/><rect x="354.0" y="102.5" width="10" height="1.2" fill="#4e5560"/><rect x="352.0" y="105.0" width="14" height="1.2" fill="#4e5560"/><rect x="354.0" y="107.5" width="10" height="1.2" fill="#4e5560"/><rect x="353.0" y="110" width="12" height="1.2" fill="#4e5560"/><rect x="374" y="100.0" width="14" height="1.2" fill="#4e5560"/><rect x="378" y="102.5" width="10" height="1.2" fill="#4e5560"/><rect x="374" y="105.0" width="14" height="1.2" fill="#4e5560"/><rect x="379" y="107.5" width="9" height="1.2" fill="#4e5560"/><rect x="374" y="110" width="14" height="1.2" fill="#4e5560"/><rect x="395" y="96" width="1" height="18" fill="#8693ab"/><rect x="396" y="96" width="1" height="18" fill="#cbd4e2"/><rect x="407" y="99.9" width="9" height="1.2" fill="#5d646f"/><path d="M404.500 99.0l1.300 1.500-1.300 1.500-1.300-1.500z" fill="#8b8f97"/><rect x="407" y="104.9" width="9" height="1.2" fill="#5d646f"/><path d="M404.500 104.0l1.300 1.500-1.300 1.500-1.300-1.500z" fill="#8b8f97"/><rect x="407" y="109.9" width="9" height="1.2" fill="#5d646f"/><path d="M404.500 109.0l1.300 1.500-1.300 1.500-1.300-1.500z" fill="#8b8f97"/><rect x="425" y="107" width="6" height="1.300" fill="#10141c"/><path d="M425 110.2h6l-3 3z" fill="#10141c"/><rect x="438" y="98" width="2" height="2" fill="#4a5f8c"/><rect x="438" y="102" width="2" height="2" fill="#4a5f8c"/><rect x="438" y="106" width="2" height="2" fill="#4a5f8c"/><rect x="438" y="110" width="2" height="2" fill="#4a5f8c"/><path d="M449.800 110.300l12.500-13 1.700 1.700-12.500 13z" fill="#a3a7ae" stroke="#7f838b" stroke-width=".8"/><path d="M451.200 110.500l12-12.500" stroke="#d4d7dc" stroke-width=".8"/><path d="M471.500 102c0-3 3-4.500 6.500-4.500s6.500 1.500 6.500 4.500v2c0 2.500-2.500 4-5.500 4l-3.500 1.500-1-2.500c-2-.8-3-2-3-4z" fill="#a9adb4" opacity=".9"/><rect x="474" y="100.500" width="2.500" height="3" fill="#e4e6ea"/><rect x="477.500" y="100.500" width="2.500" height="3" fill="#d4d7dc"/><circle cx="482" cy="103.500" r="1.500" fill="#f2f3f5" stroke="#8b8f97" stroke-width=".5"/><path d="M478.500 111.500l3.500-5.500 3 5.500M479.500 108.500l4.500 2.500" stroke="#f2f3f5" stroke-width="1.400" fill="none"/><rect x="492" y="96" width="1" height="18" fill="#8693ab"/><rect x="493" y="96" width="1" height="18" fill="#cbd4e2"/><rect x="501.5" y="99.5" width="5" height="3" fill="#c9ccd2" stroke="#4a4f5a" stroke-width="1"/><rect x="506.5" y="106.5" width="5" height="3" fill="#c9ccd2" stroke="#4a4f5a" stroke-width="1"/><rect x="522.5" y="97.5" width="5" height="3" fill="#c9ccd2" stroke="#4a4f5a" stroke-width="1"/><rect x="522" y="103" width="2" height="2" fill="#4a4f5a"/><path d="M531 100l-5.500 7" stroke="#4a4f5a" stroke-width="1"/><rect x="525.5" y="105.5" width="5.5" height="3" fill="#c9ccd2" stroke="#4a4f5a" stroke-width="1"/><rect x="533" y="105" width="1" height="1" fill="#5d646f"/><rect x="533" y="107" width="1" height="1" fill="#5d646f"/><rect x="533" y="109" width="1" height="1" fill="#5d646f"/><rect x="533" y="111" width="1" height="1" fill="#5d646f"/><rect x="525" y="111" width="1" height="1" fill="#5d646f"/><path d="M547 97l-2.500 2.500" stroke="#4a4f5a" stroke-width="1"/><rect x="544.5" y="100.5" width="5" height="3" fill="#c9ccd2" stroke="#4a4f5a" stroke-width="1"/><rect x="544" y="105" width="1" height="1" fill="#5d646f"/><rect x="546" y="105" width="1" height="1" fill="#5d646f"/><rect x="548" y="105" width="1" height="1" fill="#5d646f"/><rect x="552" y="98" width="2" height="2" fill="#4a4f5a"/><path d="M555.500 101l-5 7" stroke="#4a4f5a" stroke-width="1"/><rect x="550.5" y="106.5" width="5.5" height="3" fill="#c9ccd2" stroke="#4a4f5a" stroke-width="1"/><rect x="558" y="106" width="1" height="1" fill="#5d646f"/><rect x="558" y="108" width="1" height="1" fill="#5d646f"/><rect x="558" y="110" width="1" height="1" fill="#5d646f"/><rect x="550" y="112" width="1" height="1" fill="#5d646f"/><rect x="558" y="112" width="1.3" height="1.3" fill="#109020"/><rect x="565" y="96" width="1" height="18" fill="#8693ab"/><rect x="566" y="96" width="1" height="18" fill="#cbd4e2"/><rect x="572.800" y="98.800" width="14.600" height="12.600" fill="none" stroke="#2e323a" stroke-width="1.200" stroke-dasharray="1.200 .9"/><path d="M577 100l3 3-3 3-3-3z" fill="#787c84"/><rect x="579.5" y="106.5" width="5.5" height="3.5" fill="#8c9098" stroke="#5a5e66" stroke-width="0.9"/><path d="M599.300 98.500l3 3-3 3-3-3z" fill="#787c84"/><rect x="601.5" y="105.5" width="5.5" height="3.5" fill="#8c9098" stroke="#5a5e66" stroke-width="0.9"/><rect x="617" y="107" width="6" height="1.300" fill="#10141c"/><path d="M617 110.2h6l-3 3z" fill="#10141c"/></svg>
<div class="a" style="left:877px;top:100px;width:114px;height:22px;border:1px solid #767676;border-radius:3px;background:linear-gradient(#ffffff,#e6e7f1);box-shadow:2px 2px 3px rgba(0,0,0,.45)"></div>
<div class="t " style="left:883px;top:103.8px;font-size:12px;color:#575757;letter-spacing:-0.19px;">Кадр стека (Ctrl+7)</div>
<div class="a" style="left:6px;top:125px;width:85px;height:22px;background:#fff1cb;border-radius:3px 3px 0 0"></div>
<div class="a" style="left:6px;top:145px;width:466px;height:5px;background:#fff1cb;border-radius:0 3px 0 0"></div>
<div class="a" style="left:6px;top:149px;width:465px;height:1px;background:#a9a9a6"></div>
<div class="a" style="left:6px;top:150px;width:465px;height:1px;background:#f6f5f0"></div>
<div class="t" style="left:10.500px;top:129.500px;font-size:12px;color:#16162a">Prog1-ПМ</div>
<svg class="a" style="left:76px;top:131px" width="10" height="9" viewBox="0 0 10 9"><path d="M.8 .5l8.400 8M9.200 .5l-8.400 8" stroke="#5a4a28" stroke-width="1.500" fill="none"/></svg>
<svg class="a" style="left:458px;top:135px" width="8" height="4" viewBox="0 0 8 4"><path d="M0 0h8l-4 4z" fill="#ced4df"/></svg>
<div class="a" style="left:6px;top:151px;width:466px;height:576px;background:#fff8d7"></div>
<div class="a" style="left:6px;top:726px;width:466px;height:5px;background:#fff1cb;border-radius:0 0 3px 3px;border-top:1px solid #fffbe8"></div>
<div class="a" style="left:7px;top:151px;width:1px;height:575px;background:#c9c9c9"></div>
<svg class="a" style="left:440px;top:151px" width="32" height="560" viewBox="440 151 32 560"><rect x="461" y="151" width="7" height="549" fill="#ffff00"/><rect x="451" y="183.90" width="10" height="1" fill="#d9d9d4"/><rect x="451" y="216.23" width="10" height="1" fill="#d9d9d4"/><rect x="451" y="248.56" width="10" height="1" fill="#d9d9d4"/><rect x="451" y="280.89" width="10" height="1" fill="#d9d9d4"/><rect x="451" y="313.22" width="10" height="1" fill="#d9d9d4"/><rect x="451" y="345.55" width="10" height="1" fill="#d9d9d4"/><rect x="451" y="377.88" width="10" height="1" fill="#d9d9d4"/><rect x="451" y="410.21" width="10" height="1" fill="#d9d9d4"/><rect x="451" y="442.54" width="10" height="1" fill="#d9d9d4"/><rect x="451" y="474.87" width="10" height="1" fill="#d9d9d4"/><rect x="451" y="507.20" width="10" height="1" fill="#d9d9d4"/><rect x="451" y="539.53" width="10" height="1" fill="#d9d9d4"/><rect x="451" y="571.86" width="10" height="1" fill="#d9d9d4"/><rect x="451" y="604.19" width="10" height="1" fill="#d9d9d4"/><rect x="451" y="636.52" width="10" height="1" fill="#d9d9d4"/><rect x="451" y="668.85" width="10" height="1" fill="#d9d9d4"/><rect x="451" y="175.40" width="9.500" height="2" fill="#ff0000"/><rect x="459.300" y="175.40" width="3.600" height="2" fill="#000"/><rect x="451" y="207.73" width="9.500" height="2" fill="#ff0000"/><rect x="459.300" y="207.73" width="3.600" height="2" fill="#000"/><rect x="451" y="240.06" width="9.500" height="2" fill="#ff0000"/><rect x="459.300" y="240.06" width="3.600" height="2" fill="#000"/><rect x="451" y="272.39" width="9.500" height="2" fill="#ff0000"/><rect x="459.300" y="272.39" width="3.600" height="2" fill="#000"/><rect x="451" y="304.72" width="9.500" height="2" fill="#ff0000"/><rect x="459.300" y="304.72" width="3.600" height="2" fill="#000"/><rect x="451" y="337.05" width="9.500" height="2" fill="#ff0000"/><rect x="459.300" y="337.05" width="3.600" height="2" fill="#000"/><rect x="451" y="369.38" width="9.500" height="2" fill="#0000ff"/><rect x="459.300" y="369.38" width="3.600" height="2" fill="#000"/><rect x="451" y="466.37" width="9.500" height="2" fill="#0000ff"/><rect x="459.300" y="466.37" width="3.600" height="2" fill="#000"/><rect x="451" y="531.03" width="9.500" height="2" fill="#0000ff"/><rect x="459.300" y="531.03" width="3.600" height="2" fill="#000"/><rect x="451" y="595.69" width="9.500" height="2" fill="#0000ff"/><rect x="459.300" y="595.69" width="3.600" height="2" fill="#000"/></svg>
<svg class="a" style="left:6px;top:694px" width="466" height="12" viewBox="6 694 466 12" shape-rendering="crispEdges"><rect x="9" y="694" width="57" height="7" fill="#4682b4"/><rect x="9" y="700.500" width="65" height="1" fill="#000"/><rect x="66" y="694" width="1" height="7" fill="#000"/><rect x="67" y="694" width="6.500" height="6.500" fill="#ffff00"/><rect x="73.500" y="694" width="1" height="7.500" fill="#000"/><rect x="138" y="694" width="1" height="8" fill="#d9d6c4"/><rect x="203" y="694" width="1" height="8" fill="#d9d6c4"/><rect x="268" y="694" width="1" height="8" fill="#d9d6c4"/><rect x="332.5" y="694" width="1" height="8" fill="#d9d6c4"/><rect x="397" y="694" width="1" height="8" fill="#d9d6c4"/><rect x="163" y="694" width="2" height="6" fill="#0000ff"/><rect x="175" y="694" width="2" height="6" fill="#0000ff"/></svg>
<div class="a" style="left:2px;top:151px;width:449.500px;height:543.500px;background:#384b71;border-radius:3px 2px 4px 5px"></div>
<div class="a" style="left:6px;top:155px;width:442px;height:20px;background:#4d6082;border-radius:3px 3px 0 0"></div>
<div class="a" style="left:6px;top:174.500px;width:442px;height:515.500px;background:#fff;border-bottom:1px solid #b8b8b8;border-right:1px solid #c4c4c4"></div>
<div class="t" style="left:8.500px;top:158.500px;font-size:12px;color:#fff;letter-spacing:-0.1px">Обзор документа</div>
<svg class="a" style="left:404px;top:158px" width="42" height="12" viewBox="404 158 42 12"><path d="M404.500 162h7l-3.500 4z" fill="#d5dbe6"/><rect x="419.500" y="160.500" width="8" height="8" fill="none" stroke="#e1e6ee" stroke-width="1.100"/><rect x="419" y="160" width="9" height="2.300" fill="#e1e6ee"/><path d="M435 160.300l8.200 8M443.200 160.300l-8.200 8" stroke="#e1e6ee" stroke-width="1.500"/></svg>
<svg class="a" style="left:6px;top:175px;will-change:transform" width="442" height="505" viewBox="6 175 442 505"><g shape-rendering="crispEdges"><rect x="8" y="176" width="416" height="1" fill="#008080"/><rect x="8" y="176" width="1" height="502" fill="#008080"/><rect x="423" y="176" width="2" height="502" fill="#72bcbc"/><rect x="8" y="677" width="416" height="1" fill="#4aa9a5"/><rect x="9" y="177" width="52" height="493" fill="#4682b4"/><rect x="60.500" y="177" width="1" height="493.500" fill="#000"/><rect x="61.500" y="177" width="4.700" height="493" fill="#ffff00"/><rect x="66" y="177" width="1" height="493.500" fill="#000"/><rect x="9" y="669.500" width="58" height="1" fill="#000"/><rect x="415" y="177" width="6" height="492.500" fill="#ffff00"/><rect x="124.20" y="177" width="1" height="492.500" fill="#d6d6d6"/><rect x="182.40" y="177" width="1" height="492.500" fill="#d6d6d6"/><rect x="240.60" y="177" width="1" height="492.500" fill="#d6d6d6"/><rect x="298.80" y="177" width="1" height="492.500" fill="#d6d6d6"/><rect x="357.00" y="177" width="1" height="492.500" fill="#d6d6d6"/><rect x="67" y="205.00" width="348" height="1" fill="#dadada"/><rect x="67" y="234.05" width="348" height="1" fill="#dadada"/><rect x="67" y="263.10" width="348" height="1" fill="#dadada"/><rect x="67" y="292.15" width="348" height="1" fill="#dadada"/><rect x="67" y="321.20" width="348" height="1" fill="#dadada"/><rect x="67" y="350.25" width="348" height="1" fill="#dadada"/><rect x="67" y="379.30" width="348" height="1" fill="#dadada"/><rect x="67" y="408.35" width="348" height="1" fill="#dadada"/><rect x="67" y="437.40" width="348" height="1" fill="#dadada"/><rect x="67" y="466.45" width="348" height="1" fill="#dadada"/><rect x="67" y="495.50" width="348" height="1" fill="#dadada"/><rect x="67" y="524.55" width="348" height="1" fill="#dadada"/><rect x="67" y="553.60" width="348" height="1" fill="#dadada"/><rect x="67" y="582.65" width="348" height="1" fill="#dadada"/><rect x="67" y="611.70" width="348" height="1" fill="#dadada"/><rect x="67" y="640.75" width="348" height="1" fill="#dadada"/></g><text x="21" y="187.2" font-size="11.600" text-anchor="middle" fill="#0c1520" font-family="Liberation Sans">1</text><path d="M9 194.35H57Q61 194.35 61.500 197.35L64.500 198.35L61.500 199.35Q61 202.35 57 202.35H9z" fill="#add8e6"/><path d="M9 194.05H56.500Q61.200 194.05 61.800 197.55L65 198.35L61.800 199.15Q61.200 202.65 56.500 202.65H9" fill="none" stroke="#0a0f18" stroke-width="1"/><rect x="9" y="205.0" width="57.500" height="1.200" fill="#0a0f18"/><text x="21" y="216.3" font-size="11.600" text-anchor="middle" fill="#0c1520" font-family="Liberation Sans">2</text><path d="M9 223.40H57Q61 223.40 61.500 226.40L64.500 227.40L61.500 228.40Q61 231.40 57 231.40H9z" fill="#add8e6"/><path d="M9 223.10H56.500Q61.200 223.10 61.800 226.60L65 227.40L61.800 228.20Q61.200 231.70 56.500 231.70H9" fill="none" stroke="#0a0f18" stroke-width="1"/><rect x="9" y="234.0" width="57.500" height="1.200" fill="#0a0f18"/><text x="21" y="245.3" font-size="11.600" text-anchor="middle" fill="#0c1520" font-family="Liberation Sans">3</text><path d="M9 252.45H57Q61 252.45 61.500 255.45L64.500 256.45L61.500 257.45Q61 260.45 57 260.45H9z" fill="#add8e6"/><path d="M9 252.15H56.500Q61.200 252.15 61.800 255.65L65 256.45L61.800 257.25Q61.200 260.75 56.500 260.75H9" fill="none" stroke="#0a0f18" stroke-width="1"/><rect x="9" y="263.1" width="57.500" height="1.200" fill="#0a0f18"/><text x="21" y="274.4" font-size="11.600" text-anchor="middle" fill="#0c1520" font-family="Liberation Sans">4</text><path d="M9 281.50H57Q61 281.50 61.500 284.50L64.500 285.50L61.500 286.50Q61 289.50 57 289.50H9z" fill="#add8e6"/><path d="M9 281.20H56.500Q61.200 281.20 61.800 284.70L65 285.50L61.800 286.30Q61.200 289.80 56.500 289.80H9" fill="none" stroke="#0a0f18" stroke-width="1"/><rect x="9" y="292.1" width="57.500" height="1.200" fill="#0a0f18"/><text x="21" y="303.4" font-size="11.600" text-anchor="middle" fill="#0c1520" font-family="Liberation Sans">5</text><path d="M9 310.55H57Q61 310.55 61.500 313.55L64.500 314.55L61.500 315.55Q61 318.55 57 318.55H9z" fill="#add8e6"/><path d="M9 310.25H56.500Q61.200 310.25 61.800 313.75L65 314.55L61.800 315.35Q61.200 318.85 56.500 318.85H9" fill="none" stroke="#0a0f18" stroke-width="1"/><rect x="9" y="321.2" width="57.500" height="1.200" fill="#0a0f18"/><text x="21" y="332.5" font-size="11.600" text-anchor="middle" fill="#0c1520" font-family="Liberation Sans">6</text><path d="M9 339.60H57Q61 339.60 61.500 342.60L64.500 343.60L61.500 344.60Q61 347.60 57 347.60H9z" fill="#add8e6"/><path d="M9 339.30H56.500Q61.200 339.30 61.800 342.80L65 343.60L61.800 344.40Q61.200 347.90 56.500 347.90H9" fill="none" stroke="#0a0f18" stroke-width="1"/><rect x="9" y="350.2" width="57.500" height="1.200" fill="#0a0f18"/><text x="21" y="361.6" font-size="11.600" text-anchor="middle" fill="#0c1520" font-family="Liberation Sans">7</text><path d="M9 368.65H57Q61 368.65 61.500 371.65L64.500 372.65L61.500 373.65Q61 376.65 57 376.65H9z" fill="#add8e6"/><path d="M9 368.35H56.500Q61.200 368.35 61.800 371.85L65 372.65L61.800 373.45Q61.200 376.95 56.500 376.95H9" fill="none" stroke="#0a0f18" stroke-width="1"/><rect x="9" y="437.4" width="57.500" height="1.200" fill="#0a0f18"/><text x="21" y="448.7" font-size="11.600" text-anchor="middle" fill="#0c1520" font-family="Liberation Sans">8</text><path d="M9 455.80H57Q61 455.80 61.500 458.80L64.500 459.80L61.500 460.80Q61 463.80 57 463.80H9z" fill="#add8e6"/><path d="M9 455.50H56.500Q61.200 455.50 61.800 459.00L65 459.80L61.800 460.60Q61.200 464.10 56.500 464.10H9" fill="none" stroke="#0a0f18" stroke-width="1"/><rect x="9" y="495.5" width="57.500" height="1.200" fill="#0a0f18"/><text x="21" y="506.8" font-size="11.600" text-anchor="middle" fill="#0c1520" font-family="Liberation Sans">9</text><path d="M9 513.90H57Q61 513.90 61.500 516.90L64.500 517.90L61.500 518.90Q61 521.90 57 521.90H9z" fill="#add8e6"/><path d="M9 513.60H56.500Q61.200 513.60 61.800 517.10L65 517.90L61.800 518.70Q61.200 522.20 56.500 522.20H9" fill="none" stroke="#0a0f18" stroke-width="1"/><rect x="9" y="553.6" width="57.500" height="1.200" fill="#0a0f18"/><text x="21" y="564.9" font-size="11.600" text-anchor="middle" fill="#0c1520" font-family="Liberation Sans">10</text><path d="M9 572.00H57Q61 572.00 61.500 575.00L64.500 576.00L61.500 577.00Q61 580.00 57 580.00H9z" fill="#add8e6"/><path d="M9 571.70H56.500Q61.200 571.70 61.800 575.20L65 576.00L61.800 576.80Q61.200 580.30 56.500 580.30H9" fill="none" stroke="#0a0f18" stroke-width="1"/><path d="M66.50 198.3H90.30" stroke="#0000ff" stroke-width="2"/><path d="M100.90 198.3H357.50" stroke="#0000ff" stroke-width="2"/><rect x="66" y="197.3" width="3" height="2" fill="#ff0000"/><path d="M90.30 192.8V203.8M100.90 192.8V203.8" stroke="#0000ff" stroke-width="2"/><text x="95.6" y="182.8" font-size="5.900" text-anchor="middle" fill="#2020ff" font-family="Liberation Sans" font-weight="700" opacity=".72" text-rendering="geometricPrecision">F1P1_2</text><path d="M357.50 198.3H382.10" stroke="#ff0000" stroke-width="2"/><path d="M391.10 198.3H414.70" stroke="#ff0000" stroke-width="2"/><circle cx="386.60" cy="198.3" r="4.750" fill="#fff" stroke="#ff0000" stroke-width="1.700"/><text x="386.60" y="200.4" font-size="5.600" text-anchor="middle" fill="#ff0000" font-family="Liberation Sans" font-weight="700">S</text><rect x="413.700" y="197.35" width="3.300" height="2" fill="#000"/><text x="386.6" y="182.8" font-size="5.900" text-anchor="middle" fill="#ff2020" font-family="Liberation Sans" font-weight="700" opacity=".72" text-rendering="geometricPrecision">Z1P</text><path d="M66.50 227.4H90.30" stroke="#0000ff" stroke-width="2"/><path d="M100.90 227.4H357.50" stroke="#0000ff" stroke-width="2"/><rect x="66" y="226.4" width="3" height="2" fill="#ff0000"/><path d="M90.30 221.9V232.9M100.90 221.9V232.9" stroke="#0000ff" stroke-width="2"/><text x="95.6" y="211.9" font-size="5.900" text-anchor="middle" fill="#2020ff" font-family="Liberation Sans" font-weight="700" opacity=".72" text-rendering="geometricPrecision">F1P1_3</text><path d="M357.50 227.4H382.10" stroke="#ff0000" stroke-width="2"/><path d="M391.10 227.4H414.70" stroke="#ff0000" stroke-width="2"/><circle cx="386.60" cy="227.4" r="4.750" fill="#fff" stroke="#ff0000" stroke-width="1.700"/><text x="386.60" y="229.5" font-size="5.600" text-anchor="middle" fill="#ff0000" font-family="Liberation Sans" font-weight="700">R</text><rect x="413.700" y="226.40" width="3.300" height="2" fill="#000"/><text x="386.6" y="211.9" font-size="5.900" text-anchor="middle" fill="#ff2020" font-family="Liberation Sans" font-weight="700" opacity=".72" text-rendering="geometricPrecision">Z1P</text><path d="M66.50 256.4H90.30" stroke="#0000ff" stroke-width="2"/><path d="M100.90 256.4H357.50" stroke="#0000ff" stroke-width="2"/><rect x="66" y="255.4" width="3" height="2" fill="#ff0000"/><path d="M90.30 250.9V261.9M100.90 250.9V261.9" stroke="#0000ff" stroke-width="2"/><text x="95.6" y="240.9" font-size="5.900" text-anchor="middle" fill="#2020ff" font-family="Liberation Sans" font-weight="700" opacity=".72" text-rendering="geometricPrecision">F2P1_2</text><path d="M357.50 256.4H382.10" stroke="#ff0000" stroke-width="2"/><path d="M391.10 256.4H414.70" stroke="#ff0000" stroke-width="2"/><circle cx="386.60" cy="256.4" r="4.750" fill="#fff" stroke="#ff0000" stroke-width="1.700"/><text x="386.60" y="258.6" font-size="5.600" text-anchor="middle" fill="#ff0000" font-family="Liberation Sans" font-weight="700">S</text><rect x="413.700" y="255.45" width="3.300" height="2" fill="#000"/><text x="386.6" y="240.9" font-size="5.900" text-anchor="middle" fill="#ff2020" font-family="Liberation Sans" font-weight="700" opacity=".72" text-rendering="geometricPrecision">Z2P</text><path d="M66.50 285.5H90.30" stroke="#0000ff" stroke-width="2"/><path d="M100.90 285.5H357.50" stroke="#0000ff" stroke-width="2"/><rect x="66" y="284.5" width="3" height="2" fill="#ff0000"/><path d="M90.30 280.0V291.0M100.90 280.0V291.0" stroke="#0000ff" stroke-width="2"/><text x="95.6" y="270.0" font-size="5.900" text-anchor="middle" fill="#2020ff" font-family="Liberation Sans" font-weight="700" opacity=".72" text-rendering="geometricPrecision">F2P1_3</text><path d="M357.50 285.5H382.10" stroke="#ff0000" stroke-width="2"/><path d="M391.10 285.5H414.70" stroke="#ff0000" stroke-width="2"/><circle cx="386.60" cy="285.5" r="4.750" fill="#fff" stroke="#ff0000" stroke-width="1.700"/><text x="386.60" y="287.6" font-size="5.600" text-anchor="middle" fill="#ff0000" font-family="Liberation Sans" font-weight="700">R</text><rect x="413.700" y="284.50" width="3.300" height="2" fill="#000"/><text x="386.6" y="270.0" font-size="5.900" text-anchor="middle" fill="#ff2020" font-family="Liberation Sans" font-weight="700" opacity=".72" text-rendering="geometricPrecision">Z2P</text><path d="M66.50 314.6H90.30" stroke="#0000ff" stroke-width="2"/><path d="M100.90 314.6H357.50" stroke="#0000ff" stroke-width="2"/><rect x="66" y="313.6" width="3" height="2" fill="#ff0000"/><path d="M90.30 309.1V320.1M100.90 309.1V320.1" stroke="#0000ff" stroke-width="2"/><text x="95.6" y="299.1" font-size="5.900" text-anchor="middle" fill="#2020ff" font-family="Liberation Sans" font-weight="700" opacity=".72" text-rendering="geometricPrecision">F3P1_2</text><path d="M357.50 314.6H382.10" stroke="#ff0000" stroke-width="2"/><path d="M391.10 314.6H414.70" stroke="#ff0000" stroke-width="2"/><circle cx="386.60" cy="314.6" r="4.750" fill="#fff" stroke="#ff0000" stroke-width="1.700"/><text x="386.60" y="316.7" font-size="5.600" text-anchor="middle" fill="#ff0000" font-family="Liberation Sans" font-weight="700">S</text><rect x="413.700" y="313.55" width="3.300" height="2" fill="#000"/><text x="386.6" y="299.1" font-size="5.900" text-anchor="middle" fill="#ff2020" font-family="Liberation Sans" font-weight="700" opacity=".72" text-rendering="geometricPrecision">Z3P</text><path d="M66.50 343.6H90.30" stroke="#0000ff" stroke-width="2"/><path d="M100.90 343.6H357.50" stroke="#0000ff" stroke-width="2"/><rect x="66" y="342.6" width="3" height="2" fill="#ff0000"/><path d="M90.30 338.1V349.1M100.90 338.1V349.1" stroke="#0000ff" stroke-width="2"/><text x="95.6" y="328.1" font-size="5.900" text-anchor="middle" fill="#2020ff" font-family="Liberation Sans" font-weight="700" opacity=".72" text-rendering="geometricPrecision">F3P1_3</text><path d="M357.50 343.6H382.10" stroke="#ff0000" stroke-width="2"/><path d="M391.10 343.6H414.70" stroke="#ff0000" stroke-width="2"/><circle cx="386.60" cy="343.6" r="4.750" fill="#fff" stroke="#ff0000" stroke-width="1.700"/><text x="386.60" y="345.7" font-size="5.600" text-anchor="middle" fill="#ff0000" font-family="Liberation Sans" font-weight="700">R</text><rect x="413.700" y="342.60" width="3.300" height="2" fill="#000"/><text x="386.6" y="328.1" font-size="5.900" text-anchor="middle" fill="#ff2020" font-family="Liberation Sans" font-weight="700" opacity=".72" text-rendering="geometricPrecision">Z3P</text><path d="M66.50 372.6H124.70" stroke="#ff0000" stroke-width="2"/><path d="M95.60 371.6V431.8" stroke="#ff0000" stroke-width="2"/><path d="M270.50 371.6V431.8" stroke="#0000ff" stroke-width="2"/><path d="M124.70 372.6H148.50" stroke="#0000ff" stroke-width="2"/><path d="M148.50 367.1V378.1M159.10 367.1V378.1" stroke="#0000ff" stroke-width="2"/><text x="153.8" y="357.1" font-size="5.900" text-anchor="middle" fill="#2020ff" font-family="Liberation Sans" font-weight="700" opacity=".72" text-rendering="geometricPrecision">HVM4</text><path d="M159.10 372.6H185.90" stroke="#0000ff" stroke-width="2"/><path d="M185.90 372.6H206.70" stroke="#ff0000" stroke-width="2"/><path d="M217.30 372.6H238.10" stroke="#ff0000" stroke-width="2"/><path d="M206.70 367.1V378.1M217.30 367.1V378.1" stroke="#ff0000" stroke-width="2"/><path d="M209.40 377.1L214.60 368.1" stroke="#ff0000" stroke-width="1.800"/><text x="212.0" y="357.1" font-size="5.900" text-anchor="middle" fill="#2020ff" font-family="Liberation Sans" font-weight="700" opacity=".72" text-rendering="geometricPrecision">ZBLVKL</text><path d="M238.10 372.6H270.50" stroke="#0000ff" stroke-width="2"/><path d="M95.60 401.7H124.70" stroke="#ff0000" stroke-width="2"/><path d="M124.70 401.7H148.50" stroke="#0000ff" stroke-width="2"/><path d="M148.50 396.2V407.2M159.10 396.2V407.2" stroke="#0000ff" stroke-width="2"/><text x="153.8" y="386.2" font-size="5.900" text-anchor="middle" fill="#2020ff" font-family="Liberation Sans" font-weight="700" opacity=".72" text-rendering="geometricPrecision">FKO</text><path d="M159.10 401.7H270.50" stroke="#0000ff" stroke-width="2"/><path d="M95.60 430.8H124.70" stroke="#ff0000" stroke-width="2"/><path d="M124.70 430.8H148.50" stroke="#0000ff" stroke-width="2"/><path d="M148.50 425.2V436.2M159.10 425.2V436.2" stroke="#0000ff" stroke-width="2"/><text x="153.8" y="415.2" font-size="5.900" text-anchor="middle" fill="#2020ff" font-family="Liberation Sans" font-weight="700" opacity=".72" text-rendering="geometricPrecision">XRK061</text><path d="M159.10 430.8H270.50" stroke="#0000ff" stroke-width="2"/><path d="M270.20 372.6H357.50" stroke="#0000ff" stroke-width="2"/><path d="M357.50 372.6H382.10" stroke="#0000ff" stroke-width="2"/><path d="M391.10 372.6H414.70" stroke="#0000ff" stroke-width="2"/><circle cx="386.60" cy="372.6" r="4.750" fill="#fff" stroke="#0000ff" stroke-width="1.700"/><text x="386.60" y="374.8" font-size="5.600" text-anchor="middle" fill="#0000ff" font-family="Liberation Sans" font-weight="700">S</text><rect x="413.700" y="371.65" width="3.300" height="2" fill="#000"/><text x="386.6" y="357.1" font-size="5.900" text-anchor="middle" fill="#2020ff" font-family="Liberation Sans" font-weight="700" opacity=".72" text-rendering="geometricPrecision">ZVBIVK</text><path d="M66.50 459.8H124.70" stroke="#ff0000" stroke-width="2"/><path d="M95.60 458.8V489.9" stroke="#ff0000" stroke-width="2"/><path d="M270.50 458.8V489.9" stroke="#0000ff" stroke-width="2"/><path d="M124.70 459.8H148.50" stroke="#0000ff" stroke-width="2"/><path d="M148.50 454.3V465.3M159.10 454.3V465.3" stroke="#0000ff" stroke-width="2"/><text x="153.8" y="444.3" font-size="5.900" text-anchor="middle" fill="#2020ff" font-family="Liberation Sans" font-weight="700" opacity=".72" text-rendering="geometricPrecision">XRK062</text><path d="M159.10 459.8H206.70" stroke="#0000ff" stroke-width="2"/><path d="M206.70 454.3V465.3M217.30 454.3V465.3" stroke="#0000ff" stroke-width="2"/><text x="212.0" y="444.3" font-size="5.900" text-anchor="middle" fill="#2020ff" font-family="Liberation Sans" font-weight="700" opacity=".72" text-rendering="geometricPrecision">ZROBIVK</text><path d="M217.30 459.8H270.50" stroke="#0000ff" stroke-width="2"/><path d="M95.60 488.9H124.70" stroke="#ff0000" stroke-width="2"/><path d="M124.70 488.9H148.50" stroke="#0000ff" stroke-width="2"/><path d="M148.50 483.4V494.4M159.10 483.4V494.4" stroke="#0000ff" stroke-width="2"/><text x="153.8" y="473.4" font-size="5.900" text-anchor="middle" fill="#2020ff" font-family="Liberation Sans" font-weight="700" opacity=".72" text-rendering="geometricPrecision">HOBIVK</text><path d="M159.10 488.9H206.70" stroke="#0000ff" stroke-width="2"/><path d="M206.70 483.4V494.4M217.30 483.4V494.4" stroke="#0000ff" stroke-width="2"/><text x="212.0" y="473.4" font-size="5.900" text-anchor="middle" fill="#2020ff" font-family="Liberation Sans" font-weight="700" opacity=".72" text-rendering="geometricPrecision">ZVWT</text><path d="M217.30 488.9H270.50" stroke="#0000ff" stroke-width="2"/><path d="M270.20 459.8H357.50" stroke="#0000ff" stroke-width="2"/><path d="M357.50 459.8H382.10" stroke="#0000ff" stroke-width="2"/><path d="M391.10 459.8H414.70" stroke="#0000ff" stroke-width="2"/><circle cx="386.60" cy="459.8" r="4.750" fill="#fff" stroke="#0000ff" stroke-width="1.700"/><text x="386.60" y="461.9" font-size="5.600" text-anchor="middle" fill="#0000ff" font-family="Liberation Sans" font-weight="700">R</text><rect x="413.700" y="458.80" width="3.300" height="2" fill="#000"/><text x="386.6" y="444.3" font-size="5.900" text-anchor="middle" fill="#2020ff" font-family="Liberation Sans" font-weight="700" opacity=".72" text-rendering="geometricPrecision">ZVBIVK</text><path d="M66.50 517.9H124.70" stroke="#ff0000" stroke-width="2"/><path d="M95.60 516.9V548.0" stroke="#ff0000" stroke-width="2"/><path d="M270.50 516.9V548.0" stroke="#0000ff" stroke-width="2"/><path d="M124.70 517.9H148.50" stroke="#0000ff" stroke-width="2"/><path d="M148.50 512.4V523.4M159.10 512.4V523.4" stroke="#0000ff" stroke-width="2"/><text x="153.8" y="502.4" font-size="5.900" text-anchor="middle" fill="#2020ff" font-family="Liberation Sans" font-weight="700" opacity=".72" text-rendering="geometricPrecision">HVNKU</text><path d="M159.10 517.9H206.70" stroke="#0000ff" stroke-width="2"/><path d="M206.70 512.4V523.4M217.30 512.4V523.4" stroke="#0000ff" stroke-width="2"/><text x="212.0" y="502.4" font-size="5.900" text-anchor="middle" fill="#2020ff" font-family="Liberation Sans" font-weight="700" opacity=".72" text-rendering="geometricPrecision">ZVWT</text><path d="M217.30 517.9H270.50" stroke="#0000ff" stroke-width="2"/><path d="M95.60 547.0H124.70" stroke="#ff0000" stroke-width="2"/><path d="M124.70 547.0H148.50" stroke="#0000ff" stroke-width="2"/><path d="M148.50 541.5V552.5M159.10 541.5V552.5" stroke="#0000ff" stroke-width="2"/><text x="153.8" y="531.5" font-size="5.900" text-anchor="middle" fill="#2020ff" font-family="Liberation Sans" font-weight="700" opacity=".72" text-rendering="geometricPrecision">XRKA5</text><path d="M159.10 547.0H270.50" stroke="#0000ff" stroke-width="2"/><path d="M270.20 517.9H357.50" stroke="#0000ff" stroke-width="2"/><path d="M357.50 517.9H382.10" stroke="#0000ff" stroke-width="2"/><path d="M391.10 517.9H414.70" stroke="#0000ff" stroke-width="2"/><circle cx="386.60" cy="517.9" r="4.750" fill="#fff" stroke="#0000ff" stroke-width="1.700"/><text x="386.60" y="520.0" font-size="5.600" text-anchor="middle" fill="#0000ff" font-family="Liberation Sans" font-weight="700">S</text><rect x="413.700" y="516.90" width="3.300" height="2" fill="#000"/><text x="386.6" y="502.4" font-size="5.900" text-anchor="middle" fill="#2020ff" font-family="Liberation Sans" font-weight="700" opacity=".72" text-rendering="geometricPrecision">ZVNKU</text><path d="M66.50 576.0H124.70" stroke="#ff0000" stroke-width="2"/><path d="M95.60 575.0V664.1" stroke="#ff0000" stroke-width="2"/><path d="M270.50 575.0V664.1" stroke="#0000ff" stroke-width="2"/><path d="M124.70 576.0H148.50" stroke="#0000ff" stroke-width="2"/><path d="M148.50 570.5V581.5M159.10 570.5V581.5" stroke="#0000ff" stroke-width="2"/><text x="153.8" y="560.5" font-size="5.900" text-anchor="middle" fill="#2020ff" font-family="Liberation Sans" font-weight="700" opacity=".72" text-rendering="geometricPrecision">HONKU</text><path d="M159.10 576.0H206.70" stroke="#0000ff" stroke-width="2"/><path d="M206.70 570.5V581.5M217.30 570.5V581.5" stroke="#0000ff" stroke-width="2"/><text x="212.0" y="560.5" font-size="5.900" text-anchor="middle" fill="#2020ff" font-family="Liberation Sans" font-weight="700" opacity=".72" text-rendering="geometricPrecision">ZVWT</text><path d="M217.30 576.0H270.50" stroke="#0000ff" stroke-width="2"/><path d="M95.60 605.0H124.70" stroke="#ff0000" stroke-width="2"/><path d="M124.70 605.0H148.50" stroke="#0000ff" stroke-width="2"/><path d="M148.50 599.5V610.5M159.10 599.5V610.5" stroke="#0000ff" stroke-width="2"/><text x="153.8" y="589.5" font-size="5.900" text-anchor="middle" fill="#2020ff" font-family="Liberation Sans" font-weight="700" opacity=".72" text-rendering="geometricPrecision">H1KU21</text><path d="M159.10 605.0H270.50" stroke="#0000ff" stroke-width="2"/><path d="M95.60 634.1H124.70" stroke="#ff0000" stroke-width="2"/><path d="M124.70 634.1H148.50" stroke="#0000ff" stroke-width="2"/><path d="M148.50 628.6V639.6M159.10 628.6V639.6" stroke="#0000ff" stroke-width="2"/><text x="153.8" y="618.6" font-size="5.900" text-anchor="middle" fill="#2020ff" font-family="Liberation Sans" font-weight="700" opacity=".72" text-rendering="geometricPrecision">FKO</text><path d="M159.10 634.1H270.50" stroke="#0000ff" stroke-width="2"/><path d="M95.60 663.1H124.70" stroke="#ff0000" stroke-width="2"/><path d="M124.70 663.1H148.50" stroke="#0000ff" stroke-width="2"/><path d="M148.50 657.6V668.6M159.10 657.6V668.6" stroke="#0000ff" stroke-width="2"/><text x="153.8" y="647.6" font-size="5.900" text-anchor="middle" fill="#2020ff" font-family="Liberation Sans" font-weight="700" opacity=".72" text-rendering="geometricPrecision">HVM4</text><path d="M159.10 663.1H270.50" stroke="#0000ff" stroke-width="2"/><path d="M270.20 576.0H357.50" stroke="#0000ff" stroke-width="2"/><path d="M357.50 576.0H382.10" stroke="#0000ff" stroke-width="2"/><path d="M391.10 576.0H414.70" stroke="#0000ff" stroke-width="2"/><circle cx="386.60" cy="576.0" r="4.750" fill="#fff" stroke="#0000ff" stroke-width="1.700"/><text x="386.60" y="578.1" font-size="5.600" text-anchor="middle" fill="#0000ff" font-family="Liberation Sans" font-weight="700">R</text><rect x="413.700" y="575.00" width="3.300" height="2" fill="#000"/><text x="386.6" y="560.5" font-size="5.900" text-anchor="middle" fill="#2020ff" font-family="Liberation Sans" font-weight="700" opacity=".72" text-rendering="geometricPrecision">ZVNKU</text></svg>
<div class="a" style="left:478px;top:125px;width:156px;height:22px;background:linear-gradient(#46597f,#3f5378 35%);border-radius:3px 3px 0 0"></div>
<div class="a" style="left:478px;top:145px;width:397px;height:6px;background:#3f5378;border-radius:0 3px 0 0"></div>
<div class="t" style="left:482.7px;top:129.500px;font-size:12px;color:#fff;letter-spacing:0.1px">Имя списка шпиона[1]</div>
<svg class="a" style="left:619px;top:131.500px" width="10" height="9" viewBox="0 0 10 9"><path d="M.8 .5l8.400 8M9.200 .5l-8.400 8" stroke="#d8dde6" stroke-width="1.550" fill="none"/></svg>
<svg class="a" style="left:860.5px;top:135px" width="8" height="4" viewBox="0 0 8 4"><path d="M0 0h8l-4 4z" fill="#ced4df"/></svg>
<div class="a" style="left:478px;top:149px;width:397px;height:551px;background:#f5f5f5;border-top:1px solid #6b6b6b;border-left:1px solid #56617a"></div>
<div class="a" style="left:479px;top:150px;width:1.500px;height:550px;background:#969696"></div>
<div class="a" style="left:480px;top:150px;width:372.5px;height:26px;background:#f0f0f0;border-top:1px solid #fff;border-left:1px solid #fff;border-bottom:1px solid #6a6a6a;border-right:1px solid #6f8fc8;"></div>
<div class="t" style="left:484px;top:155.500px;font-size:12px;color:#000;letter-spacing:-0.22px;will-change:transform">Variable: 18 Items</div>
<div class="a" style="left:857px;top:150px;width:16px;height:532px;background:linear-gradient(90deg,#fdfdfd 0,#ededed 10%,#e9e9e9 45%,#f0f0f0 100%)"></div>
<svg class="a" style="left:861.5px;top:157.500px" width="8" height="4" viewBox="0 0 8 4"><path d="M0 4h8l-4-4z" fill="#b2b2b2"/></svg>
<svg class="a" style="left:861.5px;top:671.500px" width="8" height="4" viewBox="0 0 8 4"><path d="M0 0h8l-4 4z" fill="#909090"/></svg>
<div class="a" style="left:480px;top:176px;width:372.5px;height:506px;overflow:hidden;background:#f5f5f5;will-change:transform">
<div class="a" style="left:0.0px;top:0.0px;width:372.5px;height:467.0px;background:#fff;"></div>
<div class="a" style="left:1.0px;top:0.0px;width:372.5px;height:1.2px;background:#6d9ee6;"></div>
<div class="a" style="left:21.2px;top:0.0px;width:1.3px;height:467.0px;background:#6d9ee6;"></div>
<div class="a" style="left:2.0px;top:3.0px;width:18.0px;height:22.2px;background:#008000;"></div><div class="a" style="left:20.0px;top:3.0px;width:1.0px;height:23.2px;background:#6e6e6e;"></div><div class="a" style="left:1.0px;top:25.2px;width:20.0px;height:1.0px;background:#6e6e6e;"></div><div class="a" style="left:1.0px;top:26.2px;width:20.2px;height:1.0px;background:#6d9ee6;"></div>
<div class="a" style="left:23.8px;top:3.0px;width:190.8px;height:22.2px;background:#008000;"></div><div class="a" style="left:214.6px;top:3.0px;width:1.0px;height:23.0px;background:#6e6e6e;"></div><div class="a" style="left:22.8px;top:25.2px;width:192.8px;height:1.0px;background:#6e6e6e;"></div><div class="a" style="left:22.3px;top:26.2px;width:194.3px;height:1.0px;background:#6d9ee6;"></div>
<div class="a" style="left:218.5px;top:3.0px;width:153.0px;height:22.2px;background:#008000;"></div><div class="a" style="left:371.5px;top:3.0px;width:1.0px;height:23.0px;background:#6e6e6e;"></div><div class="a" style="left:217.5px;top:25.2px;width:155.0px;height:1.0px;background:#6e6e6e;"></div><div class="a" style="left:217.0px;top:26.2px;width:156.5px;height:1.0px;background:#6d9ee6;"></div>
<div class="a" style="left:216.8px;top:1.0px;width:1.2px;height:26.0px;background:#6d9ee6;"></div>
<div class="t" style="left:19.2px;top:7.5px;width:200px;text-align:center;font-size:12px;font-weight:700;color:#fff">Имя</div>
<div class="t" style="left:194.7px;top:7.5px;width:200px;text-align:center;font-size:12px;font-weight:700;color:#fff">Логическое значение</div>
<div class="a" style="left:2.0px;top:29.0px;width:18.0px;height:18.0px;background:#008000;"></div><div class="a" style="left:20.0px;top:29.0px;width:1.0px;height:19.0px;background:#6e6e6e;"></div><div class="a" style="left:1.0px;top:47.0px;width:20.0px;height:1.0px;background:#6e6e6e;"></div><div class="a" style="left:1.0px;top:48.0px;width:20.2px;height:1.0px;background:#6d9ee6;"></div>
<div class="a" style="left:22.8px;top:28.0px;width:192.8px;height:20.0px;background:#008080;"></div>
<div class="a" style="left:218.5px;top:28.0px;width:154.0px;height:20.0px;background:#008080;"></div>
<div class="a" style="left:182.2px;top:28.2px;width:17.2px;height:19.6px;background:#f0f0f0;border:1px solid #a2a2a2"></div>
<svg class="a" style="left:186.8px;top:35.8px" width="7.500" height="4.200" viewBox="0 0 7.500 4.200"><path d="M0 0h7.500l-3.750 4.200z" fill="#000"/></svg>
<div class="a" style="left:198.4px;top:28.2px;width:17.4px;height:19.6px;background:#f0f0f0;border:1px solid #a2a2a2"></div>
<svg class="a" style="left:198.6px;top:28.0px" width="17" height="18" viewBox="0 0 17 18"><ellipse cx="4.200" cy="11.700" rx="2.100" ry="2.900" transform="rotate(38 4.200 11.700)" fill="none" stroke="#0a0a0a" stroke-width="1.150"/><path d="M5.800 9.600c2-1.300 3.800-2.600 5.600-4.400M11.400 5.200l-2.200 7.400" fill="none" stroke="#0a0a0a" stroke-width="1.300"/><path d="M6.800 9.200h5.200" stroke="#0a0aff" stroke-width="1.900"/><path d="M8.300 11.700h2.300" stroke="#0a0aff" stroke-width="1.300"/><path d="M13.800 5.300l1.600 1M15.200 5l-1.300 1.700" stroke="#1a1a1a" stroke-width="1"/></svg>
<div class="a" style="left:339.7px;top:28.2px;width:17.2px;height:19.6px;background:#f0f0f0;border:1px solid #a2a2a2"></div>
<svg class="a" style="left:344.3px;top:35.8px" width="7.500" height="4.200" viewBox="0 0 7.500 4.200"><path d="M0 0h7.500l-3.750 4.200z" fill="#000"/></svg>
<div class="a" style="left:355.9px;top:28.2px;width:17.2px;height:19.6px;background:#f0f0f0;border:1px solid #a2a2a2"></div>
<svg class="a" style="left:356.1px;top:28.0px" width="17" height="18" viewBox="0 0 17 18"><ellipse cx="4.200" cy="11.700" rx="2.100" ry="2.900" transform="rotate(38 4.200 11.700)" fill="none" stroke="#0a0a0a" stroke-width="1.150"/><path d="M5.800 9.600c2-1.300 3.800-2.600 5.600-4.400M11.400 5.200l-2.200 7.400" fill="none" stroke="#0a0a0a" stroke-width="1.300"/><path d="M6.800 9.200h5.200" stroke="#0a0aff" stroke-width="1.900"/><path d="M8.300 11.700h2.300" stroke="#0a0aff" stroke-width="1.300"/><path d="M13.800 5.300l1.600 1M15.200 5l-1.300 1.700" stroke="#1a1a1a" stroke-width="1"/></svg>
<div class="a" style="left:2.0px;top:51.0px;width:18.0px;height:18.0px;background:#008000;"></div><div class="a" style="left:20.0px;top:51.0px;width:1.0px;height:19.0px;background:#6e6e6e;"></div><div class="a" style="left:1.0px;top:69.0px;width:20.0px;height:1.0px;background:#6e6e6e;"></div><div class="a" style="left:1.0px;top:70.0px;width:20.2px;height:1.0px;background:#6d9ee6;"></div>
<div class="a" style="left:22.8px;top:50.0px;width:192.8px;height:20.0px;background:#b8dbea;"></div>
<div class="a" style="left:218.5px;top:50.0px;width:154.0px;height:20.0px;background:#b8dbea;"></div>
<div class="a" style="left:198.0px;top:51.0px;width:17.0px;height:18.0px;background:#f0f0f0;border:1px solid #a6a6a6;box-shadow:inset 1px 1px 0 #fff"></div>
<svg class="a" style="left:203.0px;top:58.5px" width="7.500" height="4.200" viewBox="0 0 7.500 4.200"><path d="M0 0h7.500l-3.750 4.200z" fill="#000"/></svg>
<svg class="a" style="left:6.0px;top:55.5px" width="10" height="10" viewBox="0 0 10 10"><path d="M5 .8v8.400M.5 5h9M1.800 1.800l6.400 6.400M8.200 1.800l-6.400 6.400" stroke="#000" stroke-width=".95"/></svg>
<div class="a" style="left:2.0px;top:73.0px;width:18.0px;height:18.0px;background:#008000;"></div><div class="a" style="left:20.0px;top:73.0px;width:1.0px;height:19.0px;background:#6e6e6e;"></div><div class="a" style="left:1.0px;top:91.0px;width:20.0px;height:1.0px;background:#6e6e6e;"></div><div class="a" style="left:1.0px;top:92.0px;width:20.2px;height:1.0px;background:#6d9ee6;"></div>
<div class="a" style="left:22.8px;top:72.0px;width:192.8px;height:19.8px;background:#f0f8ff;"></div>
<div class="a" style="left:218.5px;top:72.0px;width:154.0px;height:19.8px;background:#f0f8ff;"></div>
<div class="t" style="left:26.0px;top:75.5px;font-size:12px;z-index:2;transform:scaleX(0.85);transform-origin:0 0">F1P1_2</div>
<div class="a" style="left:289.3px;top:73.0px;width:12.5px;height:12.5px;background:#fff;border-top:1px solid #7c7c7c;border-left:1px solid #7c7c7c;border-right:1px solid #e3e3e3;border-bottom:1px solid #e3e3e3;box-shadow:inset 1px 1px 0 #5d5d5d,inset -1px -1px 0 #d8d8d8"></div>
<div class="a" style="left:2.0px;top:95.0px;width:18.0px;height:18.0px;background:#008000;"></div><div class="a" style="left:20.0px;top:95.0px;width:1.0px;height:19.0px;background:#6e6e6e;"></div><div class="a" style="left:1.0px;top:113.0px;width:20.0px;height:1.0px;background:#6e6e6e;"></div><div class="a" style="left:1.0px;top:114.0px;width:20.2px;height:1.0px;background:#6d9ee6;"></div>
<div class="a" style="left:22.8px;top:94.0px;width:192.8px;height:19.8px;background:#c5d6eb;"></div>
<div class="a" style="left:218.5px;top:94.0px;width:154.0px;height:19.8px;background:#c5d6eb;"></div>
<div class="t" style="left:26.0px;top:97.5px;font-size:12px;z-index:2;transform:scaleX(0.85);transform-origin:0 0">F1P1_3</div>
<div class="a" style="left:289.3px;top:95.0px;width:12.5px;height:12.5px;background:#fff;border-top:1px solid #7c7c7c;border-left:1px solid #7c7c7c;border-right:1px solid #e3e3e3;border-bottom:1px solid #e3e3e3;box-shadow:inset 1px 1px 0 #5d5d5d,inset -1px -1px 0 #d8d8d8"></div>
<div class="a" style="left:2.0px;top:117.0px;width:18.0px;height:18.0px;background:#008000;"></div><div class="a" style="left:20.0px;top:117.0px;width:1.0px;height:19.0px;background:#6e6e6e;"></div><div class="a" style="left:1.0px;top:135.0px;width:20.0px;height:1.0px;background:#6e6e6e;"></div><div class="a" style="left:1.0px;top:136.0px;width:20.2px;height:1.0px;background:#6d9ee6;"></div>
<div class="a" style="left:22.8px;top:116.0px;width:192.8px;height:19.8px;background:#f0f8ff;"></div>
<div class="a" style="left:218.5px;top:116.0px;width:154.0px;height:19.8px;background:#f0f8ff;"></div>
<div class="t" style="left:26.0px;top:119.5px;font-size:12px;z-index:2;transform:scaleX(0.85);transform-origin:0 0">F2P1_2</div>
<div class="a" style="left:289.3px;top:117.0px;width:12.5px;height:12.5px;background:#fff;border-top:1px solid #7c7c7c;border-left:1px solid #7c7c7c;border-right:1px solid #e3e3e3;border-bottom:1px solid #e3e3e3;box-shadow:inset 1px 1px 0 #5d5d5d,inset -1px -1px 0 #d8d8d8"></div>
<div class="a" style="left:2.0px;top:139.0px;width:18.0px;height:18.0px;background:#008000;"></div><div class="a" style="left:20.0px;top:139.0px;width:1.0px;height:19.0px;background:#6e6e6e;"></div><div class="a" style="left:1.0px;top:157.0px;width:20.0px;height:1.0px;background:#6e6e6e;"></div><div class="a" style="left:1.0px;top:158.0px;width:20.2px;height:1.0px;background:#6d9ee6;"></div>
<div class="a" style="left:22.8px;top:138.0px;width:192.8px;height:19.8px;background:#c5d6eb;"></div>
<div class="a" style="left:218.5px;top:138.0px;width:154.0px;height:19.8px;background:#c5d6eb;"></div>
<div class="t" style="left:26.0px;top:141.5px;font-size:12px;z-index:2;transform:scaleX(0.85);transform-origin:0 0">F2P1_3</div>
<div class="a" style="left:289.3px;top:139.0px;width:12.5px;height:12.5px;background:#fff;border-top:1px solid #7c7c7c;border-left:1px solid #7c7c7c;border-right:1px solid #e3e3e3;border-bottom:1px solid #e3e3e3;box-shadow:inset 1px 1px 0 #5d5d5d,inset -1px -1px 0 #d8d8d8"></div>
<div class="a" style="left:2.0px;top:161.0px;width:18.0px;height:18.0px;background:#008000;"></div><div class="a" style="left:20.0px;top:161.0px;width:1.0px;height:19.0px;background:#6e6e6e;"></div><div class="a" style="left:1.0px;top:179.0px;width:20.0px;height:1.0px;background:#6e6e6e;"></div><div class="a" style="left:1.0px;top:180.0px;width:20.2px;height:1.0px;background:#6d9ee6;"></div>
<div class="a" style="left:22.8px;top:160.0px;width:192.8px;height:19.8px;background:#f0f8ff;"></div>
<div class="a" style="left:218.5px;top:160.0px;width:154.0px;height:19.8px;background:#f0f8ff;"></div>
<div class="t" style="left:26.0px;top:163.5px;font-size:12px;z-index:2;transform:scaleX(0.85);transform-origin:0 0">F3P1_2</div>
<div class="a" style="left:289.3px;top:161.0px;width:12.5px;height:12.5px;background:#fff;border-top:1px solid #7c7c7c;border-left:1px solid #7c7c7c;border-right:1px solid #e3e3e3;border-bottom:1px solid #e3e3e3;box-shadow:inset 1px 1px 0 #5d5d5d,inset -1px -1px 0 #d8d8d8"></div>
<div class="a" style="left:2.0px;top:183.0px;width:18.0px;height:18.0px;background:#008000;"></div><div class="a" style="left:20.0px;top:183.0px;width:1.0px;height:19.0px;background:#6e6e6e;"></div><div class="a" style="left:1.0px;top:201.0px;width:20.0px;height:1.0px;background:#6e6e6e;"></div><div class="a" style="left:1.0px;top:202.0px;width:20.2px;height:1.0px;background:#6d9ee6;"></div>
<div class="a" style="left:22.8px;top:182.0px;width:192.8px;height:19.8px;background:#c5d6eb;"></div>
<div class="a" style="left:218.5px;top:182.0px;width:154.0px;height:19.8px;background:#c5d6eb;"></div>
<div class="t" style="left:26.0px;top:185.5px;font-size:12px;z-index:2;transform:scaleX(0.85);transform-origin:0 0">F3P1_3</div>
<div class="a" style="left:289.3px;top:183.0px;width:12.5px;height:12.5px;background:#fff;border-top:1px solid #7c7c7c;border-left:1px solid #7c7c7c;border-right:1px solid #e3e3e3;border-bottom:1px solid #e3e3e3;box-shadow:inset 1px 1px 0 #5d5d5d,inset -1px -1px 0 #d8d8d8"></div>
<div class="a" style="left:2.0px;top:205.0px;width:18.0px;height:18.0px;background:#008000;"></div><div class="a" style="left:20.0px;top:205.0px;width:1.0px;height:19.0px;background:#6e6e6e;"></div><div class="a" style="left:1.0px;top:223.0px;width:20.0px;height:1.0px;background:#6e6e6e;"></div><div class="a" style="left:1.0px;top:224.0px;width:20.2px;height:1.0px;background:#6d9ee6;"></div>
<div class="a" style="left:22.8px;top:204.0px;width:192.8px;height:19.8px;background:#f0f8ff;"></div>
<div class="a" style="left:218.5px;top:204.0px;width:154.0px;height:19.8px;background:#f0f8ff;"></div>
<div class="t" style="left:26.0px;top:207.5px;font-size:12px;z-index:2;transform:scaleX(1.0);transform-origin:0 0">HVM4</div>
<div class="a" style="left:289.3px;top:205.0px;width:12.5px;height:12.5px;background:#fff;border-top:1px solid #7c7c7c;border-left:1px solid #7c7c7c;border-right:1px solid #e3e3e3;border-bottom:1px solid #e3e3e3;box-shadow:inset 1px 1px 0 #5d5d5d,inset -1px -1px 0 #d8d8d8"></div>
<div class="a" style="left:2.0px;top:227.0px;width:18.0px;height:18.0px;background:#008000;"></div><div class="a" style="left:20.0px;top:227.0px;width:1.0px;height:19.0px;background:#6e6e6e;"></div><div class="a" style="left:1.0px;top:245.0px;width:20.0px;height:1.0px;background:#6e6e6e;"></div><div class="a" style="left:1.0px;top:246.0px;width:20.2px;height:1.0px;background:#6d9ee6;"></div>
<div class="a" style="left:22.8px;top:226.0px;width:192.8px;height:19.8px;background:#c5d6eb;"></div>
<div class="a" style="left:218.5px;top:226.0px;width:154.0px;height:19.8px;background:#c5d6eb;"></div>
<div class="t" style="left:26.0px;top:229.5px;font-size:12px;z-index:2;transform:scaleX(0.9);transform-origin:0 0">ZBLVKL</div>
<div class="a" style="left:289.3px;top:227.0px;width:12.5px;height:12.5px;background:#fff;border-top:1px solid #7c7c7c;border-left:1px solid #7c7c7c;border-right:1px solid #e3e3e3;border-bottom:1px solid #e3e3e3;box-shadow:inset 1px 1px 0 #5d5d5d,inset -1px -1px 0 #d8d8d8"></div>
<div class="a" style="left:2.0px;top:249.0px;width:18.0px;height:18.0px;background:#008000;"></div><div class="a" style="left:20.0px;top:249.0px;width:1.0px;height:19.0px;background:#6e6e6e;"></div><div class="a" style="left:1.0px;top:267.0px;width:20.0px;height:1.0px;background:#6e6e6e;"></div><div class="a" style="left:1.0px;top:268.0px;width:20.2px;height:1.0px;background:#6d9ee6;"></div>
<div class="a" style="left:22.8px;top:248.0px;width:192.8px;height:19.8px;background:#f0f8ff;"></div>
<div class="a" style="left:218.5px;top:248.0px;width:154.0px;height:19.8px;background:#f0f8ff;"></div>
<div class="t" style="left:26.0px;top:251.5px;font-size:12px;z-index:2;transform:scaleX(0.87);transform-origin:0 0">FKO</div>
<div class="a" style="left:289.3px;top:249.0px;width:12.5px;height:12.5px;background:#fff;border-top:1px solid #7c7c7c;border-left:1px solid #7c7c7c;border-right:1px solid #e3e3e3;border-bottom:1px solid #e3e3e3;box-shadow:inset 1px 1px 0 #5d5d5d,inset -1px -1px 0 #d8d8d8"></div>
<div class="a" style="left:2.0px;top:271.0px;width:18.0px;height:18.0px;background:#008000;"></div><div class="a" style="left:20.0px;top:271.0px;width:1.0px;height:19.0px;background:#6e6e6e;"></div><div class="a" style="left:1.0px;top:289.0px;width:20.0px;height:1.0px;background:#6e6e6e;"></div><div class="a" style="left:1.0px;top:290.0px;width:20.2px;height:1.0px;background:#6d9ee6;"></div>
<div class="a" style="left:22.8px;top:270.0px;width:192.8px;height:19.8px;background:#c5d6eb;"></div>
<div class="a" style="left:218.5px;top:270.0px;width:154.0px;height:19.8px;background:#c5d6eb;"></div>
<div class="t" style="left:26.0px;top:273.5px;font-size:12px;z-index:2;transform:scaleX(0.88);transform-origin:0 0">XRK061</div>
<div class="a" style="left:289.3px;top:271.0px;width:12.5px;height:12.5px;background:#fff;border-top:1px solid #7c7c7c;border-left:1px solid #7c7c7c;border-right:1px solid #e3e3e3;border-bottom:1px solid #e3e3e3;box-shadow:inset 1px 1px 0 #5d5d5d,inset -1px -1px 0 #d8d8d8"></div>
<div class="a" style="left:2.0px;top:293.0px;width:18.0px;height:18.0px;background:#008000;"></div><div class="a" style="left:20.0px;top:293.0px;width:1.0px;height:19.0px;background:#6e6e6e;"></div><div class="a" style="left:1.0px;top:311.0px;width:20.0px;height:1.0px;background:#6e6e6e;"></div><div class="a" style="left:1.0px;top:312.0px;width:20.2px;height:1.0px;background:#6d9ee6;"></div>
<div class="a" style="left:22.8px;top:292.0px;width:192.8px;height:19.8px;background:#f0f8ff;"></div>
<div class="a" style="left:218.5px;top:292.0px;width:154.0px;height:19.8px;background:#f0f8ff;"></div>
<div class="t" style="left:26.0px;top:295.5px;font-size:12px;z-index:2;transform:scaleX(0.875);transform-origin:0 0">XRK062</div>
<div class="a" style="left:289.3px;top:293.0px;width:12.5px;height:12.5px;background:#fff;border-top:1px solid #7c7c7c;border-left:1px solid #7c7c7c;border-right:1px solid #e3e3e3;border-bottom:1px solid #e3e3e3;box-shadow:inset 1px 1px 0 #5d5d5d,inset -1px -1px 0 #d8d8d8"></div>
<div class="a" style="left:2.0px;top:315.0px;width:18.0px;height:18.0px;background:#008000;"></div><div class="a" style="left:20.0px;top:315.0px;width:1.0px;height:19.0px;background:#6e6e6e;"></div><div class="a" style="left:1.0px;top:333.0px;width:20.0px;height:1.0px;background:#6e6e6e;"></div><div class="a" style="left:1.0px;top:334.0px;width:20.2px;height:1.0px;background:#6d9ee6;"></div>
<div class="a" style="left:22.8px;top:314.0px;width:192.8px;height:19.8px;background:#c5d6eb;"></div>
<div class="a" style="left:218.5px;top:314.0px;width:154.0px;height:19.8px;background:#c5d6eb;"></div>
<div class="t" style="left:26.0px;top:317.5px;font-size:12px;z-index:2;transform:scaleX(0.91);transform-origin:0 0">ZROBIVK</div>
<div class="a" style="left:289.3px;top:315.0px;width:12.5px;height:12.5px;background:#fff;border-top:1px solid #7c7c7c;border-left:1px solid #7c7c7c;border-right:1px solid #e3e3e3;border-bottom:1px solid #e3e3e3;box-shadow:inset 1px 1px 0 #5d5d5d,inset -1px -1px 0 #d8d8d8"></div>
<div class="a" style="left:2.0px;top:337.0px;width:18.0px;height:18.0px;background:#008000;"></div><div class="a" style="left:20.0px;top:337.0px;width:1.0px;height:19.0px;background:#6e6e6e;"></div><div class="a" style="left:1.0px;top:355.0px;width:20.0px;height:1.0px;background:#6e6e6e;"></div><div class="a" style="left:1.0px;top:356.0px;width:20.2px;height:1.0px;background:#6d9ee6;"></div>
<div class="a" style="left:22.8px;top:336.0px;width:192.8px;height:19.8px;background:#f0f8ff;"></div>
<div class="a" style="left:218.5px;top:336.0px;width:154.0px;height:19.8px;background:#f0f8ff;"></div>
<div class="t" style="left:26.0px;top:339.5px;font-size:12px;z-index:2;transform:scaleX(0.93);transform-origin:0 0">HOBIVK</div>
<div class="a" style="left:289.3px;top:337.0px;width:12.5px;height:12.5px;background:#fff;border-top:1px solid #7c7c7c;border-left:1px solid #7c7c7c;border-right:1px solid #e3e3e3;border-bottom:1px solid #e3e3e3;box-shadow:inset 1px 1px 0 #5d5d5d,inset -1px -1px 0 #d8d8d8"></div>
<div class="a" style="left:2.0px;top:359.0px;width:18.0px;height:18.0px;background:#008000;"></div><div class="a" style="left:20.0px;top:359.0px;width:1.0px;height:19.0px;background:#6e6e6e;"></div><div class="a" style="left:1.0px;top:377.0px;width:20.0px;height:1.0px;background:#6e6e6e;"></div><div class="a" style="left:1.0px;top:378.0px;width:20.2px;height:1.0px;background:#6d9ee6;"></div>
<div class="a" style="left:22.8px;top:358.0px;width:192.8px;height:19.8px;background:#c5d6eb;"></div>
<div class="a" style="left:218.5px;top:358.0px;width:154.0px;height:19.8px;background:#c5d6eb;"></div>
<div class="t" style="left:26.0px;top:361.5px;font-size:12px;z-index:2;transform:scaleX(0.93);transform-origin:0 0">ZVWT</div>
<div class="a" style="left:289.3px;top:359.0px;width:12.5px;height:12.5px;background:#fff;border-top:1px solid #7c7c7c;border-left:1px solid #7c7c7c;border-right:1px solid #e3e3e3;border-bottom:1px solid #e3e3e3;box-shadow:inset 1px 1px 0 #5d5d5d,inset -1px -1px 0 #d8d8d8"></div>
<div class="a" style="left:2.0px;top:381.0px;width:18.0px;height:18.0px;background:#008000;"></div><div class="a" style="left:20.0px;top:381.0px;width:1.0px;height:19.0px;background:#6e6e6e;"></div><div class="a" style="left:1.0px;top:399.0px;width:20.0px;height:1.0px;background:#6e6e6e;"></div><div class="a" style="left:1.0px;top:400.0px;width:20.2px;height:1.0px;background:#6d9ee6;"></div>
<div class="a" style="left:22.8px;top:380.0px;width:192.8px;height:19.8px;background:#f0f8ff;"></div>
<div class="a" style="left:218.5px;top:380.0px;width:154.0px;height:19.8px;background:#f0f8ff;"></div>
<div class="t" style="left:26.0px;top:383.5px;font-size:12px;z-index:2;transform:scaleX(0.945);transform-origin:0 0">HVNKU</div>
<div class="a" style="left:289.3px;top:381.0px;width:12.5px;height:12.5px;background:#fff;border-top:1px solid #7c7c7c;border-left:1px solid #7c7c7c;border-right:1px solid #e3e3e3;border-bottom:1px solid #e3e3e3;box-shadow:inset 1px 1px 0 #5d5d5d,inset -1px -1px 0 #d8d8d8"></div>
<div class="a" style="left:2.0px;top:403.0px;width:18.0px;height:18.0px;background:#008000;"></div><div class="a" style="left:20.0px;top:403.0px;width:1.0px;height:19.0px;background:#6e6e6e;"></div><div class="a" style="left:1.0px;top:421.0px;width:20.0px;height:1.0px;background:#6e6e6e;"></div><div class="a" style="left:1.0px;top:422.0px;width:20.2px;height:1.0px;background:#6d9ee6;"></div>
<div class="a" style="left:22.8px;top:402.0px;width:192.8px;height:19.8px;background:#c5d6eb;"></div>
<div class="a" style="left:218.5px;top:402.0px;width:154.0px;height:19.8px;background:#c5d6eb;"></div>
<div class="t" style="left:26.0px;top:405.5px;font-size:12px;z-index:2;transform:scaleX(0.89);transform-origin:0 0">XRKA5</div>
<div class="a" style="left:289.3px;top:403.0px;width:12.5px;height:12.5px;background:#fff;border-top:1px solid #7c7c7c;border-left:1px solid #7c7c7c;border-right:1px solid #e3e3e3;border-bottom:1px solid #e3e3e3;box-shadow:inset 1px 1px 0 #5d5d5d,inset -1px -1px 0 #d8d8d8"></div>
<div class="a" style="left:2.0px;top:425.0px;width:18.0px;height:18.0px;background:#008000;"></div><div class="a" style="left:20.0px;top:425.0px;width:1.0px;height:19.0px;background:#6e6e6e;"></div><div class="a" style="left:1.0px;top:443.0px;width:20.0px;height:1.0px;background:#6e6e6e;"></div><div class="a" style="left:1.0px;top:444.0px;width:20.2px;height:1.0px;background:#6d9ee6;"></div>
<div class="a" style="left:22.8px;top:424.0px;width:192.8px;height:19.8px;background:#f0f8ff;"></div>
<div class="a" style="left:218.5px;top:424.0px;width:154.0px;height:19.8px;background:#f0f8ff;"></div>
<div class="t" style="left:26.0px;top:427.5px;font-size:12px;z-index:2;transform:scaleX(0.95);transform-origin:0 0">HONKU</div>
<div class="a" style="left:289.3px;top:425.0px;width:12.5px;height:12.5px;background:#fff;border-top:1px solid #7c7c7c;border-left:1px solid #7c7c7c;border-right:1px solid #e3e3e3;border-bottom:1px solid #e3e3e3;box-shadow:inset 1px 1px 0 #5d5d5d,inset -1px -1px 0 #d8d8d8"></div>
<div class="a" style="left:2.0px;top:447.0px;width:18.0px;height:18.0px;background:#008000;"></div><div class="a" style="left:20.0px;top:447.0px;width:1.0px;height:19.0px;background:#6e6e6e;"></div><div class="a" style="left:1.0px;top:465.0px;width:20.0px;height:1.0px;background:#6e6e6e;"></div><div class="a" style="left:1.0px;top:466.0px;width:20.2px;height:1.0px;background:#6d9ee6;"></div>
<div class="a" style="left:22.8px;top:446.0px;width:192.8px;height:19.8px;background:#c5d6eb;"></div>
<div class="a" style="left:218.5px;top:446.0px;width:154.0px;height:19.8px;background:#c5d6eb;"></div>
<div class="t" style="left:26.0px;top:449.5px;font-size:12px;z-index:2;transform:scaleX(0.93);transform-origin:0 0">H1KU21</div>
<div class="a" style="left:289.3px;top:447.0px;width:12.5px;height:12.5px;background:#fff;border-top:1px solid #7c7c7c;border-left:1px solid #7c7c7c;border-right:1px solid #e3e3e3;border-bottom:1px solid #e3e3e3;box-shadow:inset 1px 1px 0 #5d5d5d,inset -1px -1px 0 #d8d8d8"></div>
</div>
<div class="a" style="left:852.0px;top:176px;width:1px;height:27px;background:#7ea4e4"></div>
<div class="a" style="left:480px;top:682px;width:395px;height:18px;background:#fff"></div>
<div class="a" style="left:480.6px;top:682.500px;width:17.6px;height:16px;background:#f0f0f0;border:1px solid #9a9a9a"></div><svg class="a" style="left:480.6px;top:682.500px" width="17.6" height="16" viewBox="0 0 18 16"><path d="M5 3.500v9" stroke="#000" stroke-width="1.600"/><path d="M11.500 3.500v9l-5-4.500z" fill="#000"/></svg>
<div class="a" style="left:499.2px;top:682.500px;width:18px;height:16px;background:#f0f0f0;border:1px solid #9a9a9a"></div><svg class="a" style="left:499.2px;top:682.500px" width="18" height="16" viewBox="0 0 18 16"><path d="M11 3.500v9l-5-4.500z" fill="#555"/></svg>
<div class="a" style="left:679.4px;top:682.500px;width:18.2px;height:16px;background:#f0f0f0;border:1px solid #9a9a9a"></div><svg class="a" style="left:679.4px;top:682.500px" width="18.2" height="16" viewBox="0 0 18 16"><path d="M7 3.500v9l5-4.500z" fill="#000"/></svg>
<div class="a" style="left:698px;top:682.500px;width:18.6px;height:16px;background:#f0f0f0;border:1px solid #9a9a9a"></div><svg class="a" style="left:698px;top:682.500px" width="18.6" height="16" viewBox="0 0 18 16"><path d="M13 3.500v9" stroke="#000" stroke-width="1.600"/><path d="M6.500 3.500v9l5-4.500z" fill="#000"/></svg>
<div class="a" style="left:717px;top:682.500px;width:18.6px;height:16px;background:#f0f0f0;border:1px solid #9a9a9a"></div><svg class="a" style="left:717px;top:682.500px" width="18.6" height="16" viewBox="0 0 18 16"><path d="M9 3v10M4 8h10M5.500 4.500l7 7M12.500 4.500l-7 7" stroke="#000" stroke-width="1.150"/></svg>
<div class="t" style="left:524px;top:683.500px;font-size:13px;font-weight:700;letter-spacing:0.75px;color:#000;will-change:transform">Record</div>
<div class="t" style="left:595.5px;top:683.500px;font-size:13px;font-weight:700;letter-spacing:0.3px;color:#000;will-change:transform">of 18</div>
<div class="a" style="left:746px;top:682px;width:109px;height:17px;background:linear-gradient(#f1f1f1,#eaeaea 50%,#eeeeee)"></div>
<div class="a" style="left:855px;top:682px;width:20px;height:18px;background:#f0f0f0"></div>
<svg class="a" style="left:752px;top:686px" width="5" height="9" viewBox="0 0 5 9"><path d="M5 0v9l-5-4.500z" fill="#b0b0b0"/></svg>
<svg class="a" style="left:845px;top:686px" width="5" height="9" viewBox="0 0 5 9"><path d="M0 0v9l5-4.500z" fill="#b0b0b0"/></svg>
<div class="a" style="left:478px;top:700px;width:397px;height:27px;background:#bcc7d8"></div>
<div class="a" style="left:478px;top:727px;width:397px;height:4px;background:#3f5478;border-radius:0 0 3px 3px"></div>
<svg class="a" style="left:485px;top:706px" width="15" height="16" viewBox="0 0 15 16"><path d="M1.500 1.500l11.500 12.500" stroke="#ff3a14" stroke-width="1.400"/><path d="M12.500 2l-10.500 11.500-.8 1.200" stroke="#f0280c" stroke-width="1.700" fill="none"/></svg>
<div class="a" style="left:881px;top:125px;width:156px;height:22px;background:linear-gradient(#46597f,#3f5378 35%);border-radius:3px 3px 0 0"></div>
<div class="a" style="left:881px;top:145px;width:393px;height:6px;background:#3f5378;border-radius:0 3px 0 0"></div>
<div class="t" style="left:885.7px;top:129.500px;font-size:12px;color:#fff;letter-spacing:0.1px">Имя списка шпиона[2]</div>
<svg class="a" style="left:1022px;top:131.500px" width="10" height="9" viewBox="0 0 10 9"><path d="M.8 .5l8.400 8M9.200 .5l-8.400 8" stroke="#d8dde6" stroke-width="1.550" fill="none"/></svg>
<svg class="a" style="left:1259.5px;top:135px" width="8" height="4" viewBox="0 0 8 4"><path d="M0 0h8l-4 4z" fill="#ced4df"/></svg>
<div class="a" style="left:881px;top:149px;width:393px;height:551px;background:#f5f5f5;border-top:1px solid #6b6b6b;border-left:1px solid #56617a"></div>
<div class="a" style="left:882px;top:150px;width:1.500px;height:550px;background:#969696"></div>
<div class="a" style="left:883px;top:150px;width:372px;height:26px;background:#f0f0f0;border-top:1px solid #fff;border-left:1px solid #fff;border-bottom:1px solid #6a6a6a;"></div>
<div class="t" style="left:887px;top:155.500px;font-size:12px;color:#000;letter-spacing:-0.22px;will-change:transform">Variable: 5 Items</div>
<div class="a" style="left:1256.5px;top:150px;width:16px;height:532px;background:linear-gradient(90deg,#fdfdfd 0,#ededed 10%,#e9e9e9 45%,#f0f0f0 100%)"></div>
<svg class="a" style="left:1261.0px;top:157.500px" width="8" height="4" viewBox="0 0 8 4"><path d="M0 4h8l-4-4z" fill="#b2b2b2"/></svg>
<svg class="a" style="left:1261.0px;top:671.500px" width="8" height="4" viewBox="0 0 8 4"><path d="M0 0h8l-4 4z" fill="#909090"/></svg>
<div class="a" style="left:883px;top:176px;width:372px;height:506px;overflow:hidden;background:#f5f5f5;will-change:transform">
<div class="a" style="left:0.0px;top:0.0px;width:372.0px;height:181.0px;background:#fff;"></div>
<div class="a" style="left:1.0px;top:0.0px;width:372.0px;height:1.2px;background:#6d9ee6;"></div>
<div class="a" style="left:21.2px;top:0.0px;width:1.3px;height:181.0px;background:#6d9ee6;"></div>
<div class="a" style="left:2.0px;top:3.0px;width:18.0px;height:22.2px;background:#008000;"></div><div class="a" style="left:20.0px;top:3.0px;width:1.0px;height:23.2px;background:#6e6e6e;"></div><div class="a" style="left:1.0px;top:25.2px;width:20.0px;height:1.0px;background:#6e6e6e;"></div><div class="a" style="left:1.0px;top:26.2px;width:20.2px;height:1.0px;background:#6d9ee6;"></div>
<div class="a" style="left:23.8px;top:3.0px;width:190.8px;height:22.2px;background:#008000;"></div><div class="a" style="left:214.6px;top:3.0px;width:1.0px;height:23.0px;background:#6e6e6e;"></div><div class="a" style="left:22.8px;top:25.2px;width:192.8px;height:1.0px;background:#6e6e6e;"></div><div class="a" style="left:22.3px;top:26.2px;width:194.3px;height:1.0px;background:#6d9ee6;"></div>
<div class="a" style="left:218.4px;top:3.0px;width:156.6px;height:22.2px;background:#008000;"></div><div class="a" style="left:375.0px;top:3.0px;width:1.0px;height:23.0px;background:#6e6e6e;"></div><div class="a" style="left:217.4px;top:25.2px;width:158.6px;height:1.0px;background:#6e6e6e;"></div><div class="a" style="left:216.9px;top:26.2px;width:160.1px;height:1.0px;background:#6d9ee6;"></div>
<div class="a" style="left:216.8px;top:1.0px;width:1.2px;height:26.0px;background:#6d9ee6;"></div>
<div class="t" style="left:19.2px;top:7.5px;width:200px;text-align:center;font-size:12px;font-weight:700;color:#fff">Имя</div>
<div class="t" style="left:196.2px;top:7.5px;width:200px;text-align:center;font-size:12px;font-weight:700;color:#fff">Логическое значение</div>
<div class="a" style="left:2.0px;top:29.0px;width:18.0px;height:18.0px;background:#008000;"></div><div class="a" style="left:20.0px;top:29.0px;width:1.0px;height:19.0px;background:#6e6e6e;"></div><div class="a" style="left:1.0px;top:47.0px;width:20.0px;height:1.0px;background:#6e6e6e;"></div><div class="a" style="left:1.0px;top:48.0px;width:20.2px;height:1.0px;background:#6d9ee6;"></div>
<div class="a" style="left:22.8px;top:28.0px;width:192.8px;height:20.0px;background:#008080;"></div>
<div class="a" style="left:218.4px;top:28.0px;width:157.6px;height:20.0px;background:#008080;"></div>
<div class="a" style="left:182.2px;top:28.2px;width:17.2px;height:19.6px;background:#f0f0f0;border:1px solid #a2a2a2"></div>
<svg class="a" style="left:186.8px;top:35.8px" width="7.500" height="4.200" viewBox="0 0 7.500 4.200"><path d="M0 0h7.500l-3.750 4.200z" fill="#000"/></svg>
<div class="a" style="left:198.4px;top:28.2px;width:17.4px;height:19.6px;background:#f0f0f0;border:1px solid #a2a2a2"></div>
<svg class="a" style="left:198.6px;top:28.0px" width="17" height="18" viewBox="0 0 17 18"><ellipse cx="4.200" cy="11.700" rx="2.100" ry="2.900" transform="rotate(38 4.200 11.700)" fill="none" stroke="#0a0a0a" stroke-width="1.150"/><path d="M5.800 9.600c2-1.300 3.800-2.600 5.600-4.400M11.400 5.200l-2.200 7.400" fill="none" stroke="#0a0a0a" stroke-width="1.300"/><path d="M6.800 9.200h5.200" stroke="#0a0aff" stroke-width="1.900"/><path d="M8.300 11.700h2.300" stroke="#0a0aff" stroke-width="1.300"/><path d="M13.800 5.300l1.600 1M15.200 5l-1.300 1.700" stroke="#1a1a1a" stroke-width="1"/></svg>
<div class="a" style="left:343.2px;top:28.2px;width:17.2px;height:19.6px;background:#f0f0f0;border:1px solid #a2a2a2"></div>
<svg class="a" style="left:347.8px;top:35.8px" width="7.500" height="4.200" viewBox="0 0 7.500 4.200"><path d="M0 0h7.500l-3.750 4.200z" fill="#000"/></svg>
<div class="a" style="left:359.4px;top:28.2px;width:17.2px;height:19.6px;background:#f0f0f0;border:1px solid #a2a2a2"></div>
<svg class="a" style="left:359.6px;top:28.0px" width="17" height="18" viewBox="0 0 17 18"><ellipse cx="4.200" cy="11.700" rx="2.100" ry="2.900" transform="rotate(38 4.200 11.700)" fill="none" stroke="#0a0a0a" stroke-width="1.150"/><path d="M5.800 9.600c2-1.300 3.800-2.600 5.600-4.400M11.400 5.200l-2.200 7.400" fill="none" stroke="#0a0a0a" stroke-width="1.300"/><path d="M6.800 9.200h5.200" stroke="#0a0aff" stroke-width="1.900"/><path d="M8.300 11.700h2.300" stroke="#0a0aff" stroke-width="1.300"/><path d="M13.800 5.300l1.600 1M15.200 5l-1.300 1.700" stroke="#1a1a1a" stroke-width="1"/></svg>
<div class="a" style="left:23.3px;top:28.5px;width:16.5px;height:19.5px;background:#ececec;"></div>
<svg class="a" style="left:23.6px;top:28.80000000000001px" width="16" height="19" viewBox="0 0 16 19"><defs><linearGradient id="fn" x1="0" y1="0" x2="1" y2="0"><stop offset="0" stop-color="#6a6a6a"/><stop offset=".3" stop-color="#ececec"/><stop offset=".6" stop-color="#b4b4b4"/><stop offset="1" stop-color="#4e4e4e"/></linearGradient><linearGradient id="fn2" x1="0" y1="0" x2="1" y2="0"><stop offset="0" stop-color="#8a8a8a"/><stop offset=".35" stop-color="#f4f4f4"/><stop offset="1" stop-color="#5a5a5a"/></linearGradient></defs><path d="M1 5l5.300 6.500v5.200c0 1.200 3 1.200 3 0v-5.200l5.700-6.500z" fill="#a6a6a6"/><path d="M3.200 6l3.800 5.300v5.700h1v-5.700l-1.500-5.300z" fill="#ececec"/><path d="M15 5l-5.700 6.500v5.200c0 .6-.5 1-1 1v-6.500l3.700-6.200z" fill="#6c6c6c"/><ellipse cx="8" cy="4.300" rx="7" ry="3" fill="#f4f4f4" stroke="#6e6e6e" stroke-width="1"/><ellipse cx="8" cy="4.800" rx="4.800" ry="1.600" fill="#a2a2a2"/><ellipse cx="7" cy="4.300" rx="2.500" ry=".8" fill="#d8d8d8"/></svg>
<div class="a" style="left:22.8px;top:28.0px;width:192.8px;height:20.5px;background:transparent;border:1px dotted #4a5a5a"></div>
<div class="a" style="left:2.0px;top:51.0px;width:18.0px;height:18.0px;background:#008000;"></div><div class="a" style="left:20.0px;top:51.0px;width:1.0px;height:19.0px;background:#6e6e6e;"></div><div class="a" style="left:1.0px;top:69.0px;width:20.0px;height:1.0px;background:#6e6e6e;"></div><div class="a" style="left:1.0px;top:70.0px;width:20.2px;height:1.0px;background:#6d9ee6;"></div>
<div class="a" style="left:22.8px;top:50.0px;width:192.8px;height:20.0px;background:#b8dbea;"></div>
<div class="a" style="left:218.4px;top:50.0px;width:157.6px;height:20.0px;background:#b8dbea;"></div>
<div class="a" style="left:198.0px;top:51.0px;width:17.0px;height:18.0px;background:#f0f0f0;border:1px solid #a6a6a6;box-shadow:inset 1px 1px 0 #fff"></div>
<svg class="a" style="left:203.0px;top:58.5px" width="7.500" height="4.200" viewBox="0 0 7.500 4.200"><path d="M0 0h7.500l-3.750 4.200z" fill="#000"/></svg>
<svg class="a" style="left:6.0px;top:55.5px" width="10" height="10" viewBox="0 0 10 10"><path d="M5 .8v8.400M.5 5h9M1.800 1.800l6.400 6.400M8.200 1.800l-6.400 6.400" stroke="#000" stroke-width=".95"/></svg>
<div class="a" style="left:2.0px;top:73.0px;width:18.0px;height:18.0px;background:#008000;"></div><div class="a" style="left:20.0px;top:73.0px;width:1.0px;height:19.0px;background:#6e6e6e;"></div><div class="a" style="left:1.0px;top:91.0px;width:20.0px;height:1.0px;background:#6e6e6e;"></div><div class="a" style="left:1.0px;top:92.0px;width:20.2px;height:1.0px;background:#6d9ee6;"></div>
<div class="a" style="left:22.8px;top:72.0px;width:192.8px;height:19.8px;background:#f0f8ff;"></div>
<div class="a" style="left:218.4px;top:72.0px;width:157.6px;height:19.8px;background:#f0f8ff;"></div>
<div class="t" style="left:26.0px;top:75.5px;font-size:12px;z-index:2;transform:scaleX(0.9);transform-origin:0 0">Z1P</div>
<div class="a" style="left:291.0px;top:73.0px;width:12.5px;height:12.5px;background:#fff;border-top:1px solid #7c7c7c;border-left:1px solid #7c7c7c;border-right:1px solid #e3e3e3;border-bottom:1px solid #e3e3e3;box-shadow:inset 1px 1px 0 #5d5d5d,inset -1px -1px 0 #d8d8d8"></div>
<svg class="a" style="left:293.5px;top:75.5px" width="8" height="8" viewBox="0 0 8 8"><path d="M.3 2.600l2.700 2.700 4.700-4.700v2.800l-4.700 4.700-2.700-2.700z" fill="#000"/></svg>
<div class="a" style="left:2.0px;top:95.0px;width:18.0px;height:18.0px;background:#008000;"></div><div class="a" style="left:20.0px;top:95.0px;width:1.0px;height:19.0px;background:#6e6e6e;"></div><div class="a" style="left:1.0px;top:113.0px;width:20.0px;height:1.0px;background:#6e6e6e;"></div><div class="a" style="left:1.0px;top:114.0px;width:20.2px;height:1.0px;background:#6d9ee6;"></div>
<div class="a" style="left:22.8px;top:94.0px;width:192.8px;height:19.8px;background:#c5d6eb;"></div>
<div class="a" style="left:218.4px;top:94.0px;width:157.6px;height:19.8px;background:#c5d6eb;"></div>
<div class="t" style="left:26.0px;top:97.5px;font-size:12px;z-index:2;transform:scaleX(0.9);transform-origin:0 0">Z2P</div>
<div class="a" style="left:291.0px;top:95.0px;width:12.5px;height:12.5px;background:#fff;border-top:1px solid #7c7c7c;border-left:1px solid #7c7c7c;border-right:1px solid #e3e3e3;border-bottom:1px solid #e3e3e3;box-shadow:inset 1px 1px 0 #5d5d5d,inset -1px -1px 0 #d8d8d8"></div>
<svg class="a" style="left:293.5px;top:97.5px" width="8" height="8" viewBox="0 0 8 8"><path d="M.3 2.600l2.700 2.700 4.700-4.700v2.800l-4.700 4.700-2.700-2.700z" fill="#000"/></svg>
<div class="a" style="left:2.0px;top:117.0px;width:18.0px;height:18.0px;background:#008000;"></div><div class="a" style="left:20.0px;top:117.0px;width:1.0px;height:19.0px;background:#6e6e6e;"></div><div class="a" style="left:1.0px;top:135.0px;width:20.0px;height:1.0px;background:#6e6e6e;"></div><div class="a" style="left:1.0px;top:136.0px;width:20.2px;height:1.0px;background:#6d9ee6;"></div>
<div class="a" style="left:22.8px;top:116.0px;width:192.8px;height:19.8px;background:#f0f8ff;"></div>
<div class="a" style="left:218.4px;top:116.0px;width:157.6px;height:19.8px;background:#f0f8ff;"></div>
<div class="t" style="left:26.0px;top:119.5px;font-size:12px;z-index:2;transform:scaleX(0.91);transform-origin:0 0">ZVBIVK</div>
<div class="a" style="left:291.0px;top:117.0px;width:12.5px;height:12.5px;background:#fff;border-top:1px solid #7c7c7c;border-left:1px solid #7c7c7c;border-right:1px solid #e3e3e3;border-bottom:1px solid #e3e3e3;box-shadow:inset 1px 1px 0 #5d5d5d,inset -1px -1px 0 #d8d8d8"></div>
<div class="a" style="left:2.0px;top:139.0px;width:18.0px;height:18.0px;background:#008000;"></div><div class="a" style="left:20.0px;top:139.0px;width:1.0px;height:19.0px;background:#6e6e6e;"></div><div class="a" style="left:1.0px;top:157.0px;width:20.0px;height:1.0px;background:#6e6e6e;"></div><div class="a" style="left:1.0px;top:158.0px;width:20.2px;height:1.0px;background:#6d9ee6;"></div>
<div class="a" style="left:22.8px;top:138.0px;width:192.8px;height:19.8px;background:#c5d6eb;"></div>
<div class="a" style="left:218.4px;top:138.0px;width:157.6px;height:19.8px;background:#c5d6eb;"></div>
<div class="t" style="left:26.0px;top:141.5px;font-size:12px;z-index:2;transform:scaleX(0.93);transform-origin:0 0">ZVNKU</div>
<div class="a" style="left:291.0px;top:139.0px;width:12.5px;height:12.5px;background:#fff;border-top:1px solid #7c7c7c;border-left:1px solid #7c7c7c;border-right:1px solid #e3e3e3;border-bottom:1px solid #e3e3e3;box-shadow:inset 1px 1px 0 #5d5d5d,inset -1px -1px 0 #d8d8d8"></div>
<div class="a" style="left:2.0px;top:161.0px;width:18.0px;height:18.0px;background:#008000;"></div><div class="a" style="left:20.0px;top:161.0px;width:1.0px;height:19.0px;background:#6e6e6e;"></div><div class="a" style="left:1.0px;top:179.0px;width:20.0px;height:1.0px;background:#6e6e6e;"></div><div class="a" style="left:1.0px;top:180.0px;width:20.2px;height:1.0px;background:#6d9ee6;"></div>
<div class="a" style="left:22.8px;top:160.0px;width:192.8px;height:19.8px;background:#f0f8ff;"></div>
<div class="a" style="left:218.4px;top:160.0px;width:157.6px;height:19.8px;background:#f0f8ff;"></div>
<div class="t" style="left:26.0px;top:163.5px;font-size:12px;z-index:2;transform:scaleX(0.9);transform-origin:0 0">Z3P</div>
<div class="a" style="left:291.0px;top:161.0px;width:12.5px;height:12.5px;background:#fff;border-top:1px solid #7c7c7c;border-left:1px solid #7c7c7c;border-right:1px solid #e3e3e3;border-bottom:1px solid #e3e3e3;box-shadow:inset 1px 1px 0 #5d5d5d,inset -1px -1px 0 #d8d8d8"></div>
<svg class="a" style="left:293.5px;top:163.5px" width="8" height="8" viewBox="0 0 8 8"><path d="M.3 2.600l2.700 2.700 4.700-4.700v2.800l-4.700 4.700-2.700-2.700z" fill="#000"/></svg>
</div>
<div class="a" style="left:883px;top:682px;width:391px;height:18px;background:#fff"></div>
<div class="a" style="left:883.6px;top:682.500px;width:17.6px;height:16px;background:#f0f0f0;border:1px solid #9a9a9a"></div><svg class="a" style="left:883.6px;top:682.500px" width="17.6" height="16" viewBox="0 0 18 16"><path d="M5 3.500v9" stroke="#000" stroke-width="1.600"/><path d="M11.500 3.500v9l-5-4.500z" fill="#000"/></svg>
<div class="a" style="left:902.2px;top:682.500px;width:18px;height:16px;background:#f0f0f0;border:1px solid #9a9a9a"></div><svg class="a" style="left:902.2px;top:682.500px" width="18" height="16" viewBox="0 0 18 16"><path d="M11 3.500v9l-5-4.500z" fill="#555"/></svg>
<div class="a" style="left:1082.4px;top:682.500px;width:18.2px;height:16px;background:#f0f0f0;border:1px solid #9a9a9a"></div><svg class="a" style="left:1082.4px;top:682.500px" width="18.2" height="16" viewBox="0 0 18 16"><path d="M7 3.500v9l5-4.500z" fill="#000"/></svg>
<div class="a" style="left:1101px;top:682.500px;width:18.6px;height:16px;background:#f0f0f0;border:1px solid #9a9a9a"></div><svg class="a" style="left:1101px;top:682.500px" width="18.6" height="16" viewBox="0 0 18 16"><path d="M13 3.500v9" stroke="#000" stroke-width="1.600"/><path d="M6.500 3.500v9l5-4.500z" fill="#000"/></svg>
<div class="a" style="left:1120px;top:682.500px;width:18.6px;height:16px;background:#f0f0f0;border:1px solid #9a9a9a"></div><svg class="a" style="left:1120px;top:682.500px" width="18.6" height="16" viewBox="0 0 18 16"><path d="M9 3v10M4 8h10M5.500 4.500l7 7M12.500 4.500l-7 7" stroke="#000" stroke-width="1.150"/></svg>
<div class="t" style="left:927px;top:683.500px;font-size:13px;font-weight:700;letter-spacing:0.75px;color:#000;will-change:transform">Record</div>
<div class="t" style="left:998.5px;top:683.500px;font-size:13px;font-weight:700;letter-spacing:0.3px;color:#000;will-change:transform">of 5</div>
<div class="a" style="left:1149.3px;top:682px;width:105.0px;height:17px;background:linear-gradient(#f1f1f1,#eaeaea 50%,#eeeeee)"></div>
<div class="a" style="left:1254.3px;top:682px;width:19.700000000000045px;height:18px;background:#f0f0f0"></div>
<svg class="a" style="left:1155.3px;top:686px" width="5" height="9" viewBox="0 0 5 9"><path d="M5 0v9l-5-4.500z" fill="#555"/></svg>
<svg class="a" style="left:1244.3px;top:686px" width="5" height="9" viewBox="0 0 5 9"><path d="M0 0v9l5-4.500z" fill="#555"/></svg>
<div class="a" style="left:1167.5px;top:683px;width:68.09999999999991px;height:15px;border:1px solid #979797;border-radius:2px;background:linear-gradient(#f2f2f2 0,#e6e6e6 48%,#d4d4d4 52%,#cfcfcf 100%);box-shadow:inset 0 0 0 1px rgba(255,255,255,.7)"></div>
<div class="a" style="left:1198.5px;top:687px;width:1px;height:7px;background:#6a6a6a"></div>
<div class="a" style="left:1201.5px;top:687px;width:1px;height:7px;background:#6a6a6a"></div>
<div class="a" style="left:1204.5px;top:687px;width:1px;height:7px;background:#6a6a6a"></div>
<div class="a" style="left:881px;top:700px;width:393px;height:27px;background:#bcc7d8"></div>
<div class="a" style="left:881px;top:727px;width:393px;height:4px;background:#3f5478;border-radius:0 0 3px 3px"></div>
<svg class="a" style="left:888px;top:706px" width="15" height="16" viewBox="0 0 15 16"><path d="M1.500 1.500l11.500 12.500" stroke="#ff3a14" stroke-width="1.400"/><path d="M12.500 2l-10.500 11.500-.8 1.200" stroke="#f0280c" stroke-width="1.700" fill="none"/></svg>
<div class="t " style="left:4px;top:743px;font-size:12px;color:#ffffff;letter-spacing:-0.13px;">Элементы сохранены</div>
<div class="a" style="left:0;top:760px;width:1280px;height:8px;background:linear-gradient(90deg,#8a9cb8 0,#8a9cb8 59px,#a6c0e0 60px,#a6c0e0 940px,#8498b3 1010px,#8498b3 100%)"></div><div class="a" style="left:0;top:760px;width:1280px;height:1px;background:#3a4a66"></div><div class="a" style="left:0;top:761px;width:1280px;height:1px;background:rgba(255,255,255,.45)"></div><div class="a" style="left:59px;top:761px;width:59px;height:10px;border:1px solid #f4f8fd;border-radius:3px 3px 0 0;background:linear-gradient(90deg,#e4ecf7,#c3d4ea 60%,#b4c9e4);box-shadow:0 0 0 1px rgba(40,55,80,.55)"></div><div class="a" style="left:183px;top:761px;width:59px;height:10px;border:1px solid #f4f8fd;border-radius:3px 3px 0 0;background:linear-gradient(90deg,#e4ecf7,#c3d4ea 60%,#b4c9e4);box-shadow:0 0 0 1px rgba(40,55,80,.55)"></div><div class="a" style="left:617px;top:761px;width:59px;height:10px;border:1px solid #f4f8fd;border-radius:3px 3px 0 0;background:linear-gradient(90deg,#e4ecf7,#c3d4ea 60%,#b4c9e4);box-shadow:0 0 0 1px rgba(40,55,80,.55)"></div><div class="a" style="left:680px;top:761px;width:59px;height:10px;border:1px solid #f4f8fd;border-radius:3px 3px 0 0;background:linear-gradient(90deg,#e4ecf7,#c3d4ea 60%,#b4c9e4);box-shadow:0 0 0 1px rgba(40,55,80,.55)"></div><div class="a" style="left:742px;top:761px;width:59px;height:10px;border:1px solid #f4f8fd;border-radius:3px 3px 0 0;background:linear-gradient(90deg,#e4ecf7,#c3d4ea 60%,#b4c9e4);box-shadow:0 0 0 1px rgba(40,55,80,.55)"></div><div class="a" style="left:804px;top:761px;width:59px;height:10px;border:1px solid #f4f8fd;border-radius:3px 3px 0 0;background:linear-gradient(90deg,#e4ecf7,#c3d4ea 60%,#b4c9e4);box-shadow:0 0 0 1px rgba(40,55,80,.55)"></div><div class="a" style="left:866px;top:761px;width:59px;height:10px;border:1px solid #f4f8fd;border-radius:3px 3px 0 0;background:linear-gradient(90deg,#e4ecf7,#c3d4ea 60%,#b4c9e4);box-shadow:0 0 0 1px rgba(40,55,80,.55)"></div><div class="a" style="left:13px;top:762px;width:28px;height:28px;border-radius:50%;border:1px solid #2c5a8a;background:radial-gradient(circle at 50% 30%,#c8d8ea,#8aa6c6)"></div><div class="a" style="left:78px;top:763px;width:22px;height:22px;border-radius:50%;border:1px solid #777;background:#e8e8ee"></div><div class="a" style="left:152px;top:764px;width:14px;height:14px;border-radius:50%;border:1px solid #d8a020;background:transparent"></div><div class="a" style="left:198px;top:766px;width:12px;height:3px;background:#d8a84a"></div><div class="a" style="left:325px;top:765px;width:22px;height:4px;background:linear-gradient(100deg,#2030c0 40%,#d0d0e0 60%);transform:skewY(8deg)"></div><div class="a" style="left:389px;top:764px;width:17px;height:17px;border-radius:50%;border:2px solid #e02020;background:#fff"></div><div class="a" style="left:451px;top:764px;width:25px;height:6px;background:#a8d0d8;border-radius:6px 3px 0 0"></div><div class="a" style="left:571px;top:765px;width:28px;height:4px;background:#4aa0d8;border:1px solid #111;border-bottom:0"></div><div class="a" style="left:631px;top:764px;width:31px;height:5px;background:#8fb0dc;border:1px solid #5a7fb5;border-bottom:0;border-radius:2px 2px 0 0"></div><div class="a" style="left:693px;top:767px;width:29px;height:1px;background:#666"></div><div class="a" style="left:755px;top:767px;width:29px;height:1px;background:#777"></div><div class="a" style="left:817px;top:764px;width:22px;height:6px;border:2px solid #111;border-bottom:0;background:#f4f4f4"></div><div class="a" style="left:881px;top:764px;width:27px;height:8px;border:1px solid #3a6fc0;border-radius:8px 2px 0 0;background:#e6eefa"></div><div class="a" style="left:1265px;top:761px;width:15px;height:8px;border:1px solid #dfe6f0;background:#8e9eb6;box-shadow:0 0 0 1px rgba(40,55,80,.6)"></div>
</body></html>
